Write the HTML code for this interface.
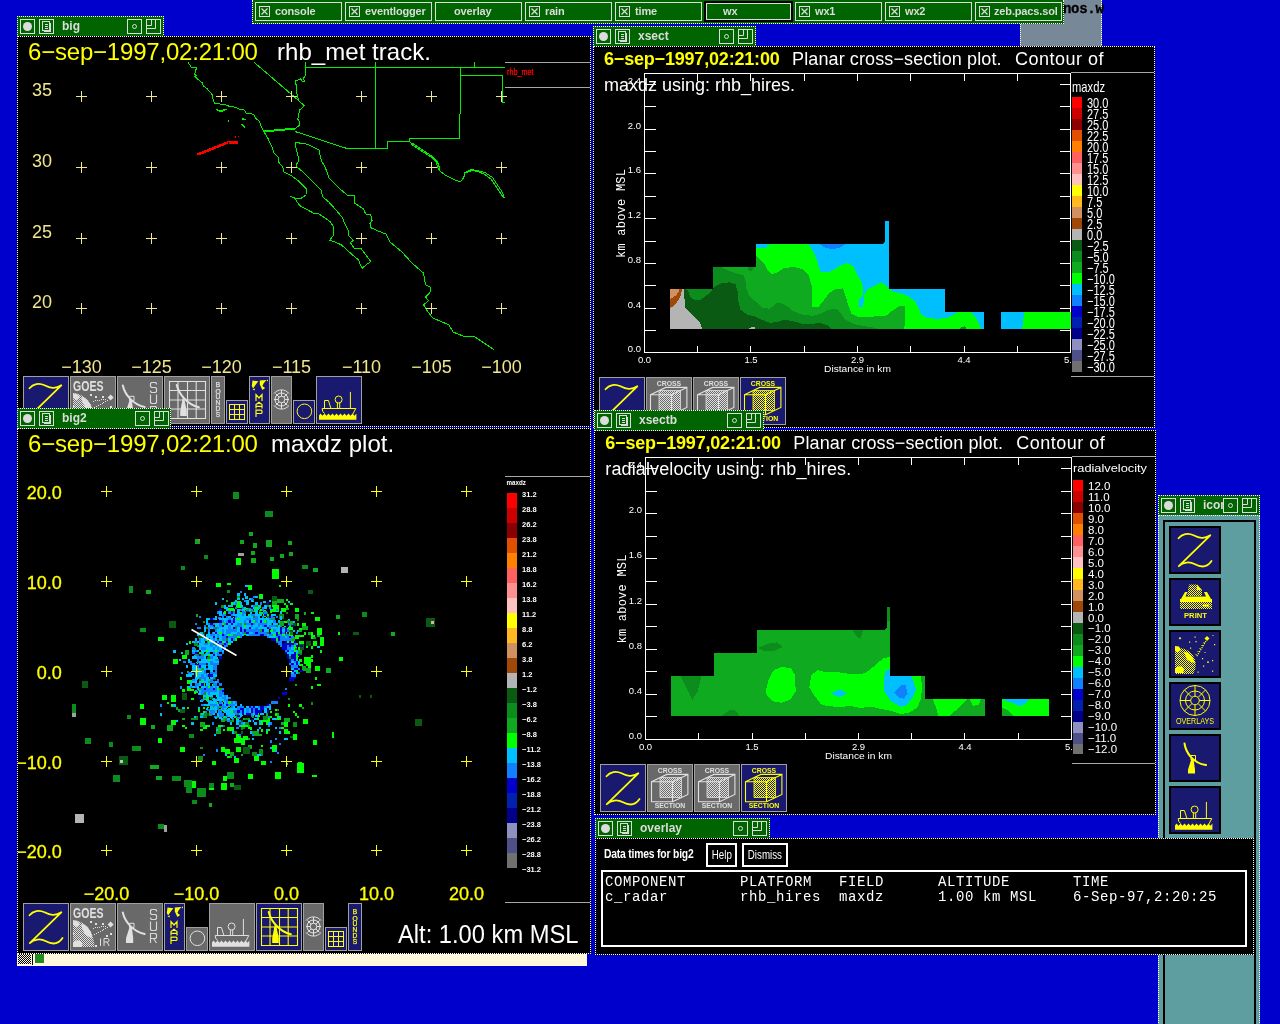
<!DOCTYPE html>
<html><head><meta charset="utf-8"><title>zeb</title>
<style>
html,body{margin:0;padding:0}
body{width:1280px;height:1024px;background:#0000cd;position:relative;overflow:hidden;font-family:"Liberation Sans",sans-serif;color:#fff}
div,span,i,svg{position:absolute;box-sizing:border-box}
svg{overflow:visible}
.dotH{height:1px;background:repeating-linear-gradient(90deg,#fff 0 1px,#000 1px 2px)}
.dotV{width:1px;background:repeating-linear-gradient(180deg,#fff 0 1px,#000 1px 2px)}
.win{background:#000;border:1px dotted #fff;overflow:hidden}
.tb{height:21px;background:#006400;border:1px dotted #fff;font:bold 12px "Liberation Sans",sans-serif;color:#dcdcdc}
.tb .b{top:2px;width:15px;height:15px;border:1px solid #dcdcdc}
.tb .c::after{content:"";position:absolute;left:2px;top:2px;width:9px;height:9px;border-radius:50%;background:#dcdcdc}
.tb .o::after{content:"";position:absolute;left:4px;top:4px;width:5px;height:5px;border-radius:50%;border:1.5px solid #dcdcdc;box-sizing:border-box}
.tb span{top:2px;line-height:14px;white-space:nowrap}
.ttl{font-size:24px;line-height:28px;white-space:nowrap;color:#fff;letter-spacing:0.05px}
.ttl b{font-weight:normal;color:#ffff00;letter-spacing:-0.2px}
.ib{background:#191970;border:1px solid #696969;outline:1px solid #808080;outline-offset:-2px}
.ig{background:#696969;border:1px solid #808080}
.ic{color:#ffff00;background:#191970;border:1px solid #a0a0a0}
.ic.g{color:#e0e0e0;background:#696969}
.ic svg{left:-1px;top:-1px}
#root{left:0;top:0;width:1280px;height:1024px;will-change:transform;overflow:hidden}
</style></head><body><div id="root">
<svg width="0" height="0" style="left:0;top:0"><defs>
<pattern id="chkw" width="2" height="2" patternUnits="userSpaceOnUse"><path d="M0 0h1v1h-1zM1 1h1v1h-1z" fill="#fff"/></pattern>
<mask id="cm" maskUnits="userSpaceOnUse" x="0" y="0" width="60" height="60"><rect width="60" height="60" fill="url(#chkw)"/></mask>
<symbol id="iz" viewBox="0 0 46 48"><path d="M6.500 12.300C10 7.800 16 6.500 21.500 9.200S32 13.500 38.300 9.300L6.800 40.200C11 36 17.500 35.300 23 38.300S34.500 42.500 39.500 35" fill="none" stroke="currentColor" stroke-width="1.8" stroke-linejoin="round" stroke-linecap="round"/></symbol>
<symbol id="igoes" viewBox="0 0 46 48"><g fill="currentColor" stroke="none">
<text x="3" y="14.900" font-family="Liberation Sans" font-weight="bold" font-size="15.500" textLength="30.500" lengthAdjust="spacingAndGlyphs">GOES</text>
<path d="M3 17.300C14 17.500 24 27 24.500 44H3z" mask="url(#cm)"/>
<path d="M3 17.300L7 17.700L10 21L6.500 24L3 22zM11 21L14.500 21.500L18 24.500L21 29.500L22.500 35L18 33.500L15 31L12.500 26.500zM3 29L5 30.500L3 32.500zM3 44V40L5.500 37.500L10 37.500L12.500 40.500L11.500 44z"/>
<path d="M40.600 18.600l3 3l-3 3l-3-3z"/>
<path shape-rendering="crispEdges" d="M23 25h1.300v1.300h-1.300zM25 24h1.300v1.300h-1.300zM27 24h1.300v1.300h-1.300zM29 24h1.300v1.300h-1.300zM31 23h1.300v1.300h-1.300zM33 23h1.300v1.300h-1.300zM35 23h1.300v1.300h-1.300zM24 31h1.300v1.300h-1.300zM26 30h1.300v1.300h-1.300zM28 29h1.300v1.300h-1.300zM30 28h1.300v1.300h-1.300zM32 27h1.300v1.300h-1.300zM33 26h1.300v1.300h-1.300zM35 25h1.300v1.300h-1.300zM37 24h1.300v1.300h-1.300zM20 18h1.500v1.500h-1.500zM25 20h1.500v1.500h-1.500zM32 20h1.500v1.500h-1.500zM40 30h1.500v1.500h-1.500zM36 32h1.500v1.500h-1.500zM25 42h1.500v1.500h-1.500z"/></g>
<path d="M30.500 35.500V43M34 43V35.500H37.500Q39 35.500 39 37.200Q39 39 37.500 39H34M37 39L39.200 43" fill="none" stroke="currentColor" stroke-width="1"/></symbol>
<symbol id="isur" viewBox="0 0 46 48"><g fill="none" stroke="currentColor" stroke-linejoin="round">
<path d="M5.800 9.500C8 19 16 28.500 27.700 31" stroke-width="2" stroke-linecap="round"/>
<path d="M12.500 20.300H17V24.700H12.500z" stroke-width="1"/>
<path d="M39.500 8.500V7.500L38.500 6.500H34.500L33.500 7.500V10.500L34.500 11.500H38.500L39.500 12.500V15.500L38.500 16.500H34.500L33.500 15.500V14.500M33.500 18.500V26.500L34.500 27.500H38.500L39.500 26.500V18.500M33.500 40V30.500H38.500L39.500 31.500V34.500L38.500 35.500H33.500M36.500 35.500L39.500 40" stroke-width="1.150" stroke="#d8d8d8"/></g>
<path d="M12.600 24L9 35.300V40H16.200V35.300L14.800 24z" fill="currentColor"/></symbol>
<symbol id="igrid" viewBox="0 0 46 48"><path d="M5.500 5.500H41.500V42.500H5.500zM14 5.500V42.500M23.500 5.500V42.500M32.200 5.500V42.500M5.500 14.500H41.500M5.500 24H41.500M5.500 33H41.500" fill="none" stroke="currentColor" stroke-width="1.100"/>
<path d="M12.700 9C15 18 23 28.500 34.900 31.300" fill="none" stroke="currentColor" stroke-width="2" stroke-linecap="round"/>
<path d="M18.700 22L16.200 35.300V40H22.800V35.300L20.500 24z" fill="currentColor"/></symbol>
<symbol id="ibnd" viewBox="0 0 14 48"><g fill="currentColor" stroke="currentColor" stroke-width="0.250" font-family="Liberation Sans" font-size="6.600" text-anchor="middle"><text x="7" y="11.300">B</text><text x="7" y="17.500">O</text><text x="7" y="23.400">U</text><text x="7" y="29.300">N</text><text x="7" y="35.200">D</text><text x="7" y="41.100">S</text></g></symbol>
<symbol id="isgrid" viewBox="0 0 22 24"><path shape-rendering="crispEdges" d="M3.500 4.500H18.500V19.500H3.500zM8.500 4.500V19.500M13.500 4.500V19.500M3.500 9.500H18.500M3.500 14.500H18.500" fill="none" stroke="currentColor" stroke-width="1.200"/></symbol>
<symbol id="imap" viewBox="0 0 21 48"><path d="M3.500 4.600L9.400 5.300L6.800 8.600L4.100 12.600L2.800 9.900zM10.800 4.600L17.400 4L14.700 7.300L13.400 9.900L16.100 11.900L13.400 13.900L10.800 8.600zM3.500 13.300L6.100 12.600L5.400 14.600zM17.500 4.500l1.500-1v2z" fill="currentColor"/>
<path d="M7 25V18.500L10 22L13 18.500V25M7 32.500V28.500L10 26.300L13 28.500V32.500M7 30.300H13M7 41V34.200H12Q13 34.200 13 35.200V36.500Q13 37.500 12 37.500H7" fill="none" stroke="currentColor" stroke-width="1.200"/></symbol>
<symbol id="iovl" viewBox="0 0 21 48"><g fill="none" stroke="currentColor" stroke-width="1"><path d="M3 17.500A9.600 9.600 0 0 1 18 17.500M3 29.500A9.600 9.600 0 0 0 18 29.500"/><circle cx="10.500" cy="23.500" r="6.500"/><circle cx="10.500" cy="23.500" r="3.300"/><path d="M10.500 14V20.200M10.500 26.800V33M3 23.500H7.200M13.800 23.500H18M4.500 17.500L8.200 21.200M16.500 17.500L12.800 21.200M4.500 29.500L8.200 25.800M16.500 29.500L12.800 25.800"/></g></symbol>
<symbol id="icirc" viewBox="0 0 22 24"><circle cx="11.400" cy="11.300" r="7.300" fill="none" stroke="currentColor" stroke-width="1"/></symbol>
<symbol id="iship" viewBox="0 0 46 48"><path d="M3 43.800V39.500l1.500-2l2 2.300l2-2.300l2 2.300l2-2.300l2 2.300l2-2.300l2 2.300l2-2.300l2 2.300l2-2.300l2 2.300l2-2.300l2 2.300l2-2.300l2 2.300l2-2.300l2 2.300l1.900-2.300V43.800z" fill="currentColor"/>
<g fill="none" stroke="currentColor" stroke-width="1"><path d="M8.500 37.500Q6 35.500 6.200 32.500H39.800L36.600 38.500M8.500 32.500V24.500H12.400L14.800 32M21.400 32.500V27M23.700 32.500V27M34.400 32.500V15.900"/><circle cx="22.600" cy="23.500" r="3.500"/></g></symbol>
<symbol id="ixs" viewBox="0 0 46 48"><g fill="currentColor" font-family="Liberation Sans" font-weight="bold" font-size="6.600"><text x="10.800" y="9" textLength="24.400" lengthAdjust="spacingAndGlyphs">CROSS</text><text x="7.700" y="43.900" textLength="30.500" lengthAdjust="spacingAndGlyphs">SECTION</text></g>
<path d="M4.500 17.700H25.500V37.800H4.500zM4.500 17.700L19.800 10.400H40.900V30.400L25.500 37.800M25.500 17.700L40.900 10.400M25.500 33.500V37.800" fill="none" stroke="currentColor" stroke-width="1.100"/>
<path d="M13 13.500H34.500V33.500H13z" fill="currentColor" mask="url(#cm)"/><path d="M13 13.500H34.500V33.500H13z" fill="none" stroke="currentColor" stroke-width="0.800"/></symbol>
<symbol id="iprint" viewBox="0 0 48 44"><g fill="currentColor"><text x="13" y="37.500" font-family="Liberation Sans" font-weight="bold" font-size="7.500" textLength="23" lengthAdjust="spacingAndGlyphs">PRINT</text>
<path d="M18 4.500H26L31 10V16H16z" mask="url(#cm)"/><path d="M26 4.500L31 10H26z"/>
<path d="M14 12L10 19H40L36 12H33L35 16.500H14.500L16.500 12zM9 19H41V22H9z"/>
<path d="M9 22H41V29H9z" mask="url(#cm)"/><path d="M32 24.500H38V26.500H32z"/></g></symbol>
<symbol id="isat" viewBox="0 0 48 44"><g fill="currentColor"><path d="M4 16.500A16.500 16.500 0 0 1 24.500 30A16.500 16.500 0 0 1 22 41.900H4z" mask="url(#cm)"/>
<path d="M4 14L8 14.500L10 18L6.500 20.500L4 19zM13 20L17 20.500L21 24.500L24 31L20 30L16 27.500zM4 41V37L6.500 34.500H10.500L13 37.500L12 41z"/>
<path d="M36 4l2.500 2.500l-2.500 2.500l-2.500-2.500z"/>
<path d="M34 9h1.200v1.200h-1.200zM32.800 11h1.200v1.200h-1.200zM31.600 13h1.200v1.200h-1.200zM30.400 15h1.200v1.200h-1.200zM29.200 17h1.200v1.200h-1.200zM28 19h1.200v1.200h-1.200zM26.800 21h1.200v1.200h-1.200zM25.600 23h1.200v1.200h-1.200zM32.500 10h1v1h-1zM30.500 13h1v1h-1zM28.500 16h1v1h-1zM26.500 19h1v1h-1zM24.500 22h1v1h-1zM9 5l1.300 1.300l-1.300 1.300l-1.300-1.300zM23.500 4.500h1.200v1.200h-1.200zM18 9.500h1.200v1.200h-1.200zM24.500 9h1.200v1.200h-1.200zM41.500 3h1v1h-1zM43 12h1.200v1.200h-1.200zM31 26h1.200v1.200h-1.200zM36 29.500h2v1.200h-2zM41 28h1.200v1.200h-1.200zM32 33.500h1.200v1.200h-1.200zM41 38.500h1.200v1.200h-1.200zM26.500 39.500h1.200v1.200h-1.200zM19 15.500h1.200v1.200h-1.200zM33.500 20h1v1h-1z"/></g></symbol>
<symbol id="iovl2" viewBox="0 0 48 44"><g fill="none" stroke="currentColor" stroke-width="1"><circle cx="24" cy="16.500" r="15"/><circle cx="24" cy="16.500" r="9.500"/><circle cx="24" cy="16.500" r="4.300"/><path d="M24 1.500V12.200M24 20.800V31.500M9 16.500H19.700M28.300 16.500H39M13.400 5.900L21 13.500M34.600 5.900L27 13.500M13.400 27.100L21 19.500M34.600 27.100L27 19.500"/></g>
<text x="5" y="39.500" fill="currentColor" font-family="Liberation Sans" font-size="8.500" textLength="38" lengthAdjust="spacingAndGlyphs">OVERLAYS</text></symbol>
<symbol id="iradar" viewBox="0 0 48 44"><path d="M13.500 7.500C15 17 22 27 35 29" fill="none" stroke="currentColor" stroke-width="2" stroke-linecap="round"/><path d="M20 19.500H24.500V24H20z" fill="none" stroke="currentColor"/><path d="M20.300 23L17 33.500V37.500H24V33.500L22.500 23z" fill="currentColor"/></symbol>
</defs></svg>



<div style="left:1020px;top:0;width:82px;height:47px;background:#778899;border-right:1px dotted #fff;border-left:1px dotted #fff"></div>
<div style="left:1063px;top:1px;font:bold 14px 'Liberation Mono',monospace;color:#000;letter-spacing:-0.3px;line-height:16px;-webkit-text-stroke:0.3px #000">nos.w</div>

<style>
#tk{left:252px;top:0;width:812px;height:24px;background:#006400;border:1px dotted #fff;border-top:none}
#tk div{top:2px;width:87px;height:19px;border:1px solid #dcdcdc;font:bold 11px "Liberation Sans",sans-serif;color:#dcdcdc;line-height:17px;white-space:nowrap}
#tk div i{left:3px;top:3px;width:11px;height:11px;border:1px solid #dcdcdc}
#tk div i svg{left:0;top:0}
#tk div span{left:19px;top:0;letter-spacing:-0.15px}
</style>
<div id="tk">
<div style="left:2px"><i><svg width="9" height="9"><path d="M1.5 1.5L7.5 7.5M7.5 1.5L1.5 7.5" stroke="#dcdcdc" stroke-width="1.3"/></svg></i><span>console</span></div>
<div style="left:92px"><i><svg width="9" height="9"><path d="M1.5 1.5L7.5 7.5M7.5 1.5L1.5 7.5" stroke="#dcdcdc" stroke-width="1.3"/></svg></i><span>eventlogger</span></div>
<div style="left:182px"><span style="left:18px">overlay</span></div>
<div style="left:272px"><i><svg width="9" height="9"><path d="M1.5 1.5L7.5 7.5M7.5 1.5L1.5 7.5" stroke="#dcdcdc" stroke-width="1.3"/></svg></i><span>rain</span></div>
<div style="left:362px"><i><svg width="9" height="9"><path d="M1.5 1.5L7.5 7.5M7.5 1.5L1.5 7.5" stroke="#dcdcdc" stroke-width="1.3"/></svg></i><span>time</span></div>
<div style="left:451px;top:1px;width:89px;height:21px;border:2px solid #000;outline:1px solid #dcdcdc;outline-offset:-3px"><span style="left:17px;top:0px">wx</span></div>
<div style="left:542px"><i><svg width="9" height="9"><path d="M1.5 1.5L7.5 7.5M7.5 1.5L1.5 7.5" stroke="#dcdcdc" stroke-width="1.3"/></svg></i><span>wx1</span></div>
<div style="left:632px"><i><svg width="9" height="9"><path d="M1.5 1.5L7.5 7.5M7.5 1.5L1.5 7.5" stroke="#dcdcdc" stroke-width="1.3"/></svg></i><span>wx2</span></div>
<div style="left:722px"><i><svg width="9" height="9"><path d="M1.5 1.5L7.5 7.5M7.5 1.5L1.5 7.5" stroke="#dcdcdc" stroke-width="1.3"/></svg></i><span style="left:18px">zeb.pacs.sol</span></div>
</div>


<div class="tb" style="left:17px;top:16px;width:147px"><i class="b c" style="left:2px"></i><i class="b d" style="left:21px"><svg width="13" height="13" shape-rendering="crispEdges"><path d="M2.500 1.500h7v9h-7zM4.500 4.500h3M4.500 6.500h3M4.500 8.500h3" fill="none" stroke="#dcdcdc"/><path d="M10.500 2.500V11.500H3.500" fill="none" stroke="#dcdcdc" stroke-width="1.6"/></svg></i><span style="left:44px">big</span><i class="b o" style="left:109px"></i><i class="b m" style="left:128px"><svg width="13" height="13"><path d="M4.5 0v5.500h-4.500M8.500 0v8.500h-8.500" fill="none" stroke="#dcdcdc"/></svg></i></div>
<div class="win" style="left:17px;top:36px;width:574px;height:391px">
<div style="left:-18px;top:-37px;width:0;height:0">
<div class="ttl" style="left:28px;top:38px"><b>6−sep−1997,02:21:00</b></div>
<div class="ttl" style="left:277px;top:38px">rhb_met track.</div>
<svg id="bigmap" width="1280" height="1024" style="left:0;top:0">
<g fill="none" stroke="#00f000" stroke-width="1" stroke-linejoin="round" shape-rendering="crispEdges">

<path d="M188 62L189.500 64.500L191 67L196.600 67.800L195.500 71L194.700 74.400L196 75.500L194.800 76.500L197.500 79L202.200 82.800L203.500 86L206.900 88.400L212.500 95L213 99L214.400 103.400L223.800 104.400L230 106.500L235 107.200L240 109.500L244.400 110L246.300 113.800L250 113.500L253.800 114.700L256 118.500L259.400 121.300L261 126L262.200 128.800L264 132"/>

<path d="M264 132L267.800 138.100L270 143L272.500 147.500L273.400 152.200L278.100 156.900L279 162.500L282.800 167.200L283.800 171.900L291.300 175.600L298.800 181.300L306.300 188.800L306 195L300 199L295 198L290.500 196.500L295 198.500L297 202L300.600 206.300L307 209.500L313.800 213.400L318.900 214L325 218L330 221.500L333 226L333.500 230.600L333 236L329.700 240.400L335 242L341.300 244.800L346 249L351.400 254L355 257L358.500 260L360 264L362.200 268.200L366 265L370.700 261.500L366 255L361 248.500L354.500 248.500L352 245L350.400 242.800L353.400 240.200L350 237L348.400 235.100L348 230L345 224L342.300 217.400L336 210L329 202.200L323 197.100L320.900 190L317.500 186.500L310.500 179.500L302.500 171.500L297 167L296 165.300L298.800 160.600L297.800 155L296 148L295 142.800"/>

<path d="M295 142.800L298 142L301 144L304 143.500L308 144.700L313 147L319.400 150.300L320 155L321.300 160.600L325 167L327 172L328.800 177.500L335 184L341.300 190L347 195L354.500 196L354.500 203L359 206L363.600 209L365.600 214L370.700 214.400L372 220.500L370 223.500L370.700 227.600L378 231L386 234L390 242L396 247L402 252L411 262L417 267.500L423.500 273L424.500 279L425.500 284.500L430.600 287.500L430 292.600L425.500 297L428.600 300.700L423.500 304.800L428 312L432.700 318L441 321.500L449 325L453 332L463 336L475 337L484 343L493.600 349.500"/>

<path d="M253.700 62L298.700 100.600L304.400 105.900L299.700 110L298.500 115L297.800 119.400L300 122L299.700 125L295 128.800"/>
<path d="M305.500 62L305.500 75L303 79L305 81.500L302.500 82L300.500 78.500L298 80L295 81L296.900 87.500L297 94L298.700 100.600"/>

<path d="M264 132L295 129M264 131L295 128M295 131.500L347 148.500L387.500 148.500L387.500 141.500L409.500 141.500L409.500 138.500L459.500 138.500L459.500 117.500L460.500 110L460.500 67.500"/>

<path d="M305.500 67.500L505 67.500M375.500 62L375.500 148.500M474.500 62L474.500 67.500M460.500 75.500L502.500 75.500L502.500 102.500L505 102.500"/>

<path d="M409.500 141.500L412.500 145L420 150L430 156.250L436.250 162.500L438.750 170L445 175L455 180L460.500 182L463.750 177.500L465 172.500L471.250 169.500L477.500 170.500L485 172.500L492.500 177.500L497.500 185L502.500 192.500L504.500 198"/>
<path d="M412 143L421 149L431 155.500L437.500 162L440 169.500M466 173L471.500 170.500L478 171.500L484 174L491 179L496 186.500L501 194L504 198"/>

<path d="M216 109.500L220 111L224 110L227 109.500M218 110.500L223 111.500M228.400 120.500L229 121.500M242 118.500L244 119.500L245.500 119M241.500 124.500L243.500 126L245.500 127.500" stroke-width="1.4"/>
</g>

<g stroke="#ff0000" fill="none" shape-rendering="crispEdges">
<path d="M197.500 154.500L228 142.500" stroke-width="2.6"/>
<path d="M228 140.500h10.500l-1 3.500h-8.500z" fill="#ff0000" stroke="none"/><path d="M235 137.500l1.500 -1M237.500 136.500h1.500" stroke-width="1.2"/>
</g>

<path d="M505 62.500H590M505 87.500H590" stroke="#a8a8a8" stroke-width="1" fill="none" shape-rendering="crispEdges"/>
<text x="507" y="75" fill="#ff0000" stroke="#ff0000" stroke-width="0.300" font-family="Liberation Sans" font-size="8.500" textLength="26.500" lengthAdjust="spacingAndGlyphs">rhb_met</text>

<path d="M76 96.5h11M81.5 91.0v11M146 96.5h11M151.5 91.0v11M216 96.5h11M221.5 91.0v11M286 96.5h11M291.5 91.0v11M356 96.5h11M361.5 91.0v11M426 96.5h11M431.5 91.0v11M496 96.5h11M501.5 91.0v11M76 167.5h11M81.5 162.0v11M146 167.5h11M151.5 162.0v11M216 167.5h11M221.5 162.0v11M286 167.5h11M291.5 162.0v11M356 167.5h11M361.5 162.0v11M426 167.5h11M431.5 162.0v11M496 167.5h11M501.5 162.0v11M76 238.5h11M81.5 233.0v11M146 238.5h11M151.5 233.0v11M216 238.5h11M221.5 233.0v11M286 238.5h11M291.5 233.0v11M356 238.5h11M361.5 233.0v11M426 238.5h11M431.5 233.0v11M496 238.5h11M501.5 233.0v11M76 308.5h11M81.5 303.0v11M146 308.5h11M151.5 303.0v11M216 308.5h11M221.5 303.0v11M286 308.5h11M291.5 303.0v11M356 308.5h11M361.5 303.0v11M426 308.5h11M431.5 303.0v11M496 308.5h11M501.5 303.0v11" stroke="#f0e68c" stroke-width="1" fill="none" shape-rendering="crispEdges"/>
<g fill="#f0e68c" font-family="Liberation Sans" font-size="18">
<text x="32" y="96.0">35</text><text x="32" y="167.0">30</text><text x="32" y="238.0">25</text><text x="32" y="308.0">20</text><text x="81.5" y="372.5" text-anchor="middle">−130</text><text x="151.5" y="372.5" text-anchor="middle">−125</text><text x="221.5" y="372.5" text-anchor="middle">−120</text><text x="291.5" y="372.5" text-anchor="middle">−115</text><text x="361.5" y="372.5" text-anchor="middle">−110</text><text x="431.5" y="372.5" text-anchor="middle">−105</text><text x="501.5" y="372.5" text-anchor="middle">−100</text></g>

</svg>

<div class="ic" style="left:23px;top:376px;width:46px;height:48px"><svg width="46" height="48"><use href="#iz"/></svg></div><div class="ic g" style="left:70px;top:376px;width:46px;height:48px"><svg width="46" height="48"><use href="#igoes"/></svg></div><div class="ic g" style="left:117px;top:376px;width:46px;height:48px"><svg width="46" height="48"><use href="#isur"/></svg></div><div class="ic g" style="left:164px;top:376px;width:46px;height:48px"><svg width="46" height="48"><use href="#igrid"/></svg></div><div class="ic g" style="left:211px;top:376px;width:14px;height:48px"><svg width="14" height="48"><use href="#ibnd"/></svg></div><div class="ic" style="left:226px;top:400px;width:22px;height:24px"><svg width="22" height="24"><use href="#isgrid"/></svg></div><div class="ic" style="left:249px;top:376px;width:21px;height:48px"><svg width="21" height="48"><use href="#imap"/></svg></div><div class="ic g" style="left:271px;top:376px;width:21px;height:48px"><svg width="21" height="48"><use href="#iovl"/></svg></div><div class="ic" style="left:293px;top:400px;width:22px;height:24px"><svg width="22" height="24"><use href="#icirc"/></svg></div><div class="ic" style="left:316px;top:376px;width:46px;height:48px"><svg width="46" height="48"><use href="#iship"/></svg></div>
</div>
</div>


<div class="win" style="left:17px;top:428px;width:574px;height:526px">
<div style="left:-18px;top:-429px;width:0;height:0">
<div class="ttl" style="left:28px;top:430px"><b>6−sep−1997,02:21:00</b></div>
<div class="ttl" style="left:271px;top:430px">maxdz plot.</div>
<svg width="1280" height="1024" style="left:0;top:0">
<g shape-rendering="crispEdges">
<path fill="#00ff00" d="M299.25 627.75h2.25v2.25h-2.25zM270 711h2.25v2.25h-2.25zM265.5 717.75h4.5v4.5h-4.5zM236.25 711h2.25v2.25h-2.25zM254.25 756h4.5v4.5h-4.5zM222.75 715.5h2.25v2.25h-2.25zM252 598.5h2.25v3.375h-2.25zM267.75 729h2.25v2.25h-2.25zM261 760.5h4.5v4.5h-4.5zM171 695.25h4.5v6.75h-4.5zM186.75 706.5h2.25v2.25h-2.25zM240.75 612h2.25v3.375h-2.25zM299.25 634.5h2.25v2.25h-2.25zM297 618.75h2.25v2.25h-2.25zM243 722.25h4.5v4.5h-4.5zM301.5 643.5h2.25v2.25h-2.25zM202.5 695.25h6.75v4.5h-6.75zM182.25 654.75h4.5v4.5h-4.5zM245.25 623.25h2.25v2.25h-2.25zM182.25 724.5h2.25v2.25h-2.25zM290.25 634.5h2.25v2.25h-2.25zM312.75 641.25h4.5v4.5h-4.5zM317.25 684h3.375v2.25h-3.375zM301.5 666h2.25v2.25h-2.25zM220.5 618.75h3.375v2.25h-3.375zM162 695.25h4.5v4.5h-4.5zM310.5 686.25h2.25v2.25h-2.25zM265.5 722.25h2.25v2.25h-2.25zM285.75 634.5h3.375v2.25h-3.375zM157.5 738h4.5v4.5h-4.5zM270 715.5h2.25v2.25h-2.25zM290.25 603h2.25v2.25h-2.25zM310.5 645.75h2.25v3.375h-2.25zM227.25 582.75h3.375v2.25h-3.375zM297 623.25h2.25v2.25h-2.25zM193.5 690.75h2.25v3.375h-2.25zM319.5 650.25h2.25v2.25h-2.25zM288 625.5h4.5v4.5h-4.5zM319.5 641.25h4.5v4.5h-4.5zM315 666h4.5v4.5h-4.5zM240.75 713.25h2.25v2.25h-2.25zM288 704.25h2.25v2.25h-2.25zM258.75 612h2.25v2.25h-2.25zM308.25 659.25h2.25v2.25h-2.25zM218.25 704.25h2.25v3.375h-2.25zM227.25 756h2.25v2.25h-2.25zM218.25 697.5h2.25v2.25h-2.25zM301.5 634.5h2.25v2.25h-2.25zM202.5 641.25h2.25v2.25h-2.25zM310.5 659.25h2.25v2.25h-2.25zM240.75 740.25h4.5v4.5h-4.5zM222.75 776.25h4.5v4.5h-4.5zM272.25 744.75h4.5v6.75h-4.5zM261 720h2.25v2.25h-2.25zM263.25 720h2.25v2.25h-2.25zM191.25 688.5h2.25v2.25h-2.25zM270 616.5h2.25v2.25h-2.25zM227.25 726.75h6.75v4.5h-6.75zM207 724.5h3.375v2.25h-3.375zM315 616.5h4.5v4.5h-4.5zM270 609.75h2.25v3.375h-2.25zM247.5 726.75h2.25v2.25h-2.25zM213.75 708.75h2.25v2.25h-2.25zM263.25 609.75h2.25v2.25h-2.25zM234 758.25h4.5v4.5h-4.5zM281.25 634.5h2.25v2.25h-2.25zM200.25 679.5h4.5v4.5h-4.5zM258.75 594h4.5v4.5h-4.5zM236.25 717.75h2.25v2.25h-2.25zM276.75 630h2.25v2.25h-2.25zM254.25 625.5h2.25v2.25h-2.25zM184.5 726.75h2.25v2.25h-2.25zM297 762.75h6.75v10.125h-6.75zM249.75 618.75h2.25v2.25h-2.25zM294.75 607.5h4.5v4.5h-4.5zM283.5 603h2.25v2.25h-2.25zM261 618.75h4.5v4.5h-4.5zM285.75 627.75h2.25v2.25h-2.25zM218.25 695.25h2.25v2.25h-2.25zM216 693h4.5v4.5h-4.5zM211.5 657h6.75v4.5h-6.75zM211.5 684h2.25v2.25h-2.25zM218.25 704.25h2.25v2.25h-2.25zM220.5 747h4.5v4.5h-4.5zM292.5 641.25h2.25v2.25h-2.25zM171 704.25h2.25v2.25h-2.25zM243 735.75h4.5v4.5h-4.5zM216 582.75h4.5v4.5h-4.5zM283.5 625.5h2.25v2.25h-2.25zM218.25 697.5h2.25v2.25h-2.25zM270 630h2.25v2.25h-2.25zM290.25 643.5h6.75v6.75h-6.75zM276.75 632.25h4.5v4.5h-4.5zM218.25 724.5h2.25v2.25h-2.25zM139.5 704.25h4.5v4.5h-4.5zM288 643.5h2.25v3.375h-2.25zM252 614.25h2.25v3.375h-2.25zM297 616.5h2.25v2.25h-2.25zM180 677.25h2.25v2.25h-2.25zM216 702h2.25v2.25h-2.25zM202.5 706.5h2.25v2.25h-2.25zM202.5 688.5h2.25v2.25h-2.25zM308.25 666h2.25v2.25h-2.25zM283.5 717.75h4.5v4.5h-4.5zM283.5 621h3.375v2.25h-3.375zM220.5 783h6.75v6.75h-6.75zM236.25 747h4.5v4.5h-4.5zM225 749.25h4.5v4.5h-4.5zM317.25 627.75h4.5v6.75h-4.5zM285.75 632.25h4.5v4.5h-4.5zM171 720h4.5v4.5h-4.5zM252 618.75h2.25v3.375h-2.25zM204.75 661.5h4.5v4.5h-4.5zM261 627.75h2.25v3.375h-2.25zM310.5 634.5h4.5v4.5h-4.5zM234 715.5h2.25v2.25h-2.25zM254.25 614.25h4.5v4.5h-4.5zM200.25 729h2.25v2.25h-2.25zM252 720h2.25v2.25h-2.25zM299.25 641.25h4.5v4.5h-4.5zM279 636.75h2.25v2.25h-2.25zM312.75 740.25h4.5v4.5h-4.5zM254.25 605.25h4.5v4.5h-4.5zM272.25 630h2.25v2.25h-2.25zM294.75 657h2.25v2.25h-2.25zM229.5 729h2.25v2.25h-2.25zM240.75 724.5h2.25v2.25h-2.25zM236.25 632.25h4.5v4.5h-4.5zM240.75 713.25h2.25v2.25h-2.25zM191.25 679.5h2.25v2.25h-2.25zM236.25 733.5h4.5v4.5h-4.5zM270 722.25h2.25v2.25h-2.25zM285.75 598.5h2.25v2.25h-2.25zM195.75 661.5h2.25v2.25h-2.25zM279 632.25h2.25v3.375h-2.25zM272.25 627.75h4.5v4.5h-4.5zM303.75 657h6.75v6.75h-6.75zM290.25 627.75h2.25v2.25h-2.25zM189 780.75h6.75v6.75h-6.75zM265.5 731.25h2.25v2.25h-2.25zM261 722.25h2.25v2.25h-2.25zM236.25 738h2.25v2.25h-2.25zM207 677.25h2.25v2.25h-2.25zM256.5 717.75h2.25v2.25h-2.25zM238.5 627.75h2.25v3.375h-2.25zM139.5 717.75h6.75v6.75h-6.75zM247.5 614.25h2.25v2.25h-2.25zM202.5 641.25h2.25v2.25h-2.25zM211.5 663.75h2.25v2.25h-2.25zM198 708.75h2.25v3.375h-2.25zM261 729h2.25v3.375h-2.25zM274.5 771.75h6.75v6.75h-6.75zM303.75 632.25h2.25v2.25h-2.25zM236.25 600.75h4.5v6.75h-4.5zM274.5 708.75h2.25v2.25h-2.25zM252 625.5h2.25v3.375h-2.25zM231.75 625.5h3.375v2.25h-3.375zM288 632.25h4.5v4.5h-4.5zM297 715.5h2.25v2.25h-2.25zM243 724.5h2.25v2.25h-2.25zM315 677.25h2.25v2.25h-2.25zM299.25 663.75h3.375v2.25h-3.375zM263.25 614.25h2.25v2.25h-2.25zM218.25 641.25h2.25v2.25h-2.25zM299.25 659.25h2.25v2.25h-2.25zM213.75 639h2.25v2.25h-2.25zM283.5 634.5h4.5v4.5h-4.5zM180 708.75h2.25v2.25h-2.25zM247.5 585h4.5v4.5h-4.5zM337.5 632.25h2.25v2.25h-2.25zM213.75 697.5h2.25v2.25h-2.25zM225 706.5h2.25v2.25h-2.25zM243 630h6.75v4.5h-6.75zM272.25 605.25h6.75v6.75h-6.75zM186.75 686.25h4.5v4.5h-4.5zM243 616.5h3.375v2.25h-3.375zM227.25 711h2.25v2.25h-2.25zM227.25 713.25h3.375v2.25h-3.375zM236.25 558h4.5v6.75h-4.5zM294.75 634.5h4.5v4.5h-4.5zM243 607.5h2.25v2.25h-2.25zM256.5 715.5h2.25v2.25h-2.25zM301.5 623.25h4.5v4.5h-4.5zM213.75 733.5h2.25v2.25h-2.25zM285.75 634.5h2.25v2.25h-2.25zM234 621h2.25v2.25h-2.25zM292.5 648h4.5v4.5h-4.5zM222.75 729h2.25v2.25h-2.25zM180 747h4.5v4.5h-4.5zM279 585h2.25v2.25h-2.25zM281.25 607.5h4.5v4.5h-4.5zM229.5 607.5h4.5v4.5h-4.5zM285.75 641.25h2.25v2.25h-2.25zM306 645.75h2.25v2.25h-2.25zM225 753.75h2.25v2.25h-2.25zM213.75 688.5h2.25v3.375h-2.25zM240.75 713.25h2.25v2.25h-2.25zM240.75 627.75h4.5v4.5h-4.5zM263.25 623.25h3.375v3.375h-3.375zM231.75 708.75h2.25v2.25h-2.25zM254.25 609.75h2.25v2.25h-2.25zM252 713.25h2.25v2.25h-2.25zM236.25 722.25h2.25v2.25h-2.25zM222.75 708.75h2.25v3.375h-2.25zM220.5 634.5h2.25v2.25h-2.25zM189 641.25h2.25v2.25h-2.25zM258.75 627.75h2.25v2.25h-2.25zM285.75 605.25h2.25v2.25h-2.25zM283.5 722.25h4.5v4.5h-4.5zM265.5 616.5h2.25v2.25h-2.25zM288 641.25h4.5v4.5h-4.5zM166.5 702h2.25v2.25h-2.25zM270 618.75h2.25v2.25h-2.25zM182.25 688.5h2.25v3.375h-2.25zM236.25 738h4.5v4.5h-4.5zM207 699.75h2.25v2.25h-2.25zM310.5 632.25h2.25v2.25h-2.25zM195.75 690.75h2.25v2.25h-2.25zM292.5 733.5h4.5v6.75h-4.5zM272.25 569.25h6.75v10.125h-6.75zM256.5 713.25h2.25v2.25h-2.25zM283.5 729h4.5v4.5h-4.5zM229.5 616.5h4.5v4.5h-4.5zM281.25 636.75h2.25v3.375h-2.25zM299.25 704.25h2.25v2.25h-2.25zM238.5 711h4.5v4.5h-4.5zM279 632.25h2.25v2.25h-2.25zM267.75 717.75h2.25v2.25h-2.25zM186.75 679.5h4.5v4.5h-4.5zM306 661.5h4.5v4.5h-4.5zM211.5 675h4.5v4.5h-4.5zM292.5 711h2.25v2.25h-2.25zM191.25 697.5h2.25v2.25h-2.25zM202.5 724.5h4.5v4.5h-4.5zM240.75 738h4.5v4.5h-4.5zM288 731.25h2.25v2.25h-2.25zM290.25 648h2.25v2.25h-2.25zM222.75 699.75h3.375v2.25h-3.375zM211.5 760.5h4.5v4.5h-4.5zM216 695.25h2.25v2.25h-2.25zM238.5 612h3.375v2.25h-3.375zM281.25 726.75h2.25v2.25h-2.25zM227.25 607.5h2.25v3.375h-2.25zM294.75 713.25h2.25v2.25h-2.25zM234 738h4.5v4.5h-4.5zM222.75 706.5h2.25v2.25h-2.25zM249.75 720h2.25v2.25h-2.25zM227.25 630h2.25v3.375h-2.25zM276.75 715.5h4.5v4.5h-4.5zM310.5 654.75h2.25v3.375h-2.25zM249.75 726.75h2.25v3.375h-2.25zM202.5 684h2.25v2.25h-2.25zM238.5 632.25h2.25v3.375h-2.25zM202.5 711h4.5v4.5h-4.5zM279 634.5h3.375v2.25h-3.375zM261 744.75h2.25v2.25h-2.25zM173.25 659.25h4.5v4.5h-4.5zM290.25 632.25h2.25v2.25h-2.25zM274.5 713.25h2.25v2.25h-2.25zM209.25 785.25h4.5v4.5h-4.5zM177.75 708.75h3.375v2.25h-3.375zM225 702h2.25v2.25h-2.25zM157.5 636.75h6.75v4.5h-6.75zM243 607.5h4.5v4.5h-4.5zM283.5 720h2.25v2.25h-2.25zM243 616.5h3.375v2.25h-3.375zM258.75 605.25h2.25v2.25h-2.25zM258.75 625.5h4.5v4.5h-4.5zM297 661.5h2.25v2.25h-2.25zM238.5 713.25h2.25v2.25h-2.25zM294.75 650.25h4.5v6.75h-4.5zM207 704.25h2.25v3.375h-2.25zM225 702h4.5v4.5h-4.5zM319.5 636.75h4.5v4.5h-4.5zM310.5 612h3.375v2.25h-3.375z"/>
<path fill="#10aa20" d="M294.75 684h2.25v2.25h-2.25zM308.25 632.25h2.25v2.25h-2.25zM272.25 618.75h2.25v2.25h-2.25zM290.25 639h2.25v2.25h-2.25zM285.75 639h3.375v2.25h-3.375zM229.5 625.5h2.25v3.375h-2.25zM247.5 724.5h2.25v2.25h-2.25zM247.5 717.75h2.25v2.25h-2.25zM303.75 612h2.25v3.375h-2.25zM276.75 598.5h6.75v4.5h-6.75zM231.75 720h2.25v2.25h-2.25zM236.25 708.75h2.25v2.25h-2.25zM252 731.25h6.75v4.5h-6.75zM229.5 706.5h2.25v2.25h-2.25zM243 722.25h3.375v2.25h-3.375zM317.25 634.5h2.25v2.25h-2.25zM279 715.5h2.25v2.25h-2.25zM229.5 756h2.25v2.25h-2.25zM211.5 645.75h2.25v3.375h-2.25zM218.25 708.75h2.25v3.375h-2.25zM177.75 708.75h2.25v3.375h-2.25zM265.5 540h6.75v6.75h-6.75zM265.5 713.25h2.25v2.25h-2.25zM294.75 614.25h4.5v4.5h-4.5zM240.75 753.75h2.25v2.25h-2.25zM220.5 717.75h4.5v4.5h-4.5zM225 634.5h2.25v2.25h-2.25zM299.25 630h2.25v2.25h-2.25zM216 726.75h4.5v6.75h-4.5zM227.25 625.5h4.5v4.5h-4.5zM200.25 652.5h2.25v2.25h-2.25zM276.75 713.25h2.25v2.25h-2.25zM283.5 717.75h6.75v4.5h-6.75zM182.25 717.75h2.25v2.25h-2.25zM312.75 636.75h3.375v2.25h-3.375zM229.5 751.5h4.5v4.5h-4.5zM238.5 711h2.25v2.25h-2.25zM265.5 618.75h4.5v4.5h-4.5zM240.75 711h2.25v2.25h-2.25zM240.75 630h2.25v2.25h-2.25zM195.75 614.25h2.25v2.25h-2.25zM209.25 713.25h2.25v2.25h-2.25zM256.5 625.5h4.5v4.5h-4.5zM186.75 670.5h2.25v2.25h-2.25zM200.25 713.25h2.25v2.25h-2.25zM270 623.25h2.25v2.25h-2.25zM297 650.25h4.5v4.5h-4.5zM281.25 722.25h2.25v2.25h-2.25zM285.75 607.5h3.375v2.25h-3.375zM150.75 724.5h4.5v4.5h-4.5zM252 715.5h2.25v2.25h-2.25zM306 668.25h4.5v4.5h-4.5zM184.5 650.25h4.5v4.5h-4.5zM175.5 706.5h2.25v3.375h-2.25zM238.5 715.5h2.25v2.25h-2.25zM258.75 733.5h3.375v2.25h-3.375zM272.25 598.5h4.5v6.75h-4.5zM297 650.25h2.25v2.25h-2.25zM301.5 706.5h2.25v2.25h-2.25zM220.5 704.25h2.25v2.25h-2.25zM290.25 636.75h4.5v4.5h-4.5zM288 643.5h2.25v2.25h-2.25zM326.25 668.25h4.5v4.5h-4.5zM213.75 650.25h2.25v2.25h-2.25zM283.5 639h2.25v2.25h-2.25zM265.5 621h2.25v2.25h-2.25zM209.25 702h2.25v2.25h-2.25zM166.5 724.5h6.75v6.75h-6.75zM193.5 648h2.25v2.25h-2.25zM301.5 666h4.5v4.5h-4.5zM247.5 607.5h6.75v4.5h-6.75zM243 717.75h2.25v2.25h-2.25zM146.25 589.5h4.5v4.5h-4.5zM211.5 704.25h6.75v4.5h-6.75zM247.5 744.75h4.5v4.5h-4.5zM247.5 744.75h2.25v2.25h-2.25zM204.75 652.5h3.375v2.25h-3.375zM285.75 630h2.25v2.25h-2.25zM256.5 614.25h2.25v2.25h-2.25zM292.5 639h2.25v2.25h-2.25zM261 625.5h4.5v4.5h-4.5zM288 621h4.5v4.5h-4.5zM200.25 722.25h4.5v4.5h-4.5zM279 621h4.5v4.5h-4.5zM247.5 738h2.25v2.25h-2.25zM301.5 625.5h6.75v4.5h-6.75z"/>
<path fill="#0c8c1c" d="M195.75 677.25h2.25v2.25h-2.25zM362.25 612h4.5v4.5h-4.5zM258.75 609.75h2.25v2.25h-2.25zM209.25 663.75h4.5v4.5h-4.5zM200.25 747h2.25v2.25h-2.25zM254.25 618.75h2.25v2.25h-2.25zM220.5 605.25h3.375v2.25h-3.375zM207 663.75h2.25v2.25h-2.25zM234 731.25h3.375v2.25h-3.375zM290.25 632.25h2.25v2.25h-2.25zM213.75 690.75h2.25v2.25h-2.25zM202.5 621h2.25v2.25h-2.25zM297 618.75h2.25v2.25h-2.25zM261 612h3.375v2.25h-3.375zM299.25 652.5h2.25v2.25h-2.25zM258.75 749.25h4.5v6.75h-4.5zM292.5 722.25h4.5v4.5h-4.5zM218.25 715.5h2.25v2.25h-2.25zM207 661.5h2.25v2.25h-2.25zM202.5 713.25h4.5v4.5h-4.5zM216 639h4.5v4.5h-4.5zM229.5 720h2.25v2.25h-2.25zM294.75 648h2.25v2.25h-2.25zM245.25 717.75h2.25v2.25h-2.25zM227.25 589.5h2.25v3.375h-2.25zM236.25 711h3.375v2.25h-3.375zM216 634.5h2.25v2.25h-2.25zM238.5 623.25h2.25v2.25h-2.25zM189 733.5h4.5v4.5h-4.5zM234 600.75h2.25v2.25h-2.25zM198 756h4.5v4.5h-4.5zM139.5 627.75h6.75v4.5h-6.75zM207 708.75h2.25v2.25h-2.25zM245.25 722.25h3.375v2.25h-3.375zM209.25 783h4.5v4.5h-4.5zM276.75 708.75h2.25v2.25h-2.25zM263.25 715.5h4.5v4.5h-4.5zM227.25 771.75h6.75v6.75h-6.75zM240.75 726.75h2.25v3.375h-2.25zM207 657h2.25v2.25h-2.25zM265.5 612h2.25v2.25h-2.25zM218.25 713.25h2.25v2.25h-2.25zM202.5 713.25h2.25v3.375h-2.25zM222.75 724.5h2.25v2.25h-2.25zM225 717.75h2.25v3.375h-2.25zM301.5 564.75h6.75v4.5h-6.75zM193.5 715.5h4.5v4.5h-4.5zM285.75 612h2.25v2.25h-2.25zM236.25 708.75h2.25v2.25h-2.25zM252 751.5h4.5v4.5h-4.5zM193.5 641.25h4.5v4.5h-4.5zM191.25 717.75h2.25v2.25h-2.25zM274.5 625.5h2.25v2.25h-2.25zM207 650.25h2.25v2.25h-2.25zM288 630h2.25v2.25h-2.25zM202.5 672.75h2.25v2.25h-2.25zM236.25 713.25h4.5v4.5h-4.5zM238.5 720h4.5v4.5h-4.5zM207 643.5h4.5v4.5h-4.5zM310.5 702h2.25v3.375h-2.25zM279 614.25h4.5v4.5h-4.5zM288 697.5h2.25v2.25h-2.25zM243 726.75h2.25v2.25h-2.25zM249.75 614.25h4.5v4.5h-4.5zM272.25 625.5h2.25v3.375h-2.25zM216 715.5h2.25v2.25h-2.25zM204.75 661.5h4.5v4.5h-4.5zM281.25 634.5h2.25v2.25h-2.25z"/>
<path fill="#0a5a14" d="M292.5 623.25h3.375v2.25h-3.375zM234 632.25h2.25v3.375h-2.25zM227.25 634.5h2.25v2.25h-2.25zM198 632.25h6.75v6.75h-6.75zM182.25 693h4.5v6.75h-4.5zM245.25 609.75h3.375v2.25h-3.375zM218.25 702h2.25v2.25h-2.25zM290.25 735.75h2.25v2.25h-2.25zM238.5 720h4.5v4.5h-4.5zM211.5 675h4.5v4.5h-4.5zM252 607.5h2.25v3.375h-2.25zM207 704.25h2.25v2.25h-2.25zM168.75 621h6.75v6.75h-6.75zM299.25 643.5h4.5v6.75h-4.5zM216 632.25h2.25v2.25h-2.25zM279 627.75h2.25v2.25h-2.25zM245.25 618.75h3.375v2.25h-3.375zM240.75 731.25h2.25v2.25h-2.25zM288 621h2.25v2.25h-2.25zM272.25 596.25h4.5v4.5h-4.5zM180 708.75h4.5v4.5h-4.5zM306 641.25h4.5v4.5h-4.5zM290.25 630h3.375v2.25h-3.375zM234 785.25h6.75v4.5h-6.75zM258.75 720h2.25v2.25h-2.25zM209.25 645.75h4.5v4.5h-4.5zM308.25 589.5h4.5v4.5h-4.5zM243 747h6.75v6.75h-6.75zM281.25 634.5h4.5v4.5h-4.5zM207 713.25h2.25v2.25h-2.25zM216 690.75h4.5v4.5h-4.5z"/>
<path fill="#00bfff" d="M173.25 704.25h2.25v2.25h-2.25zM272.25 717.75h2.25v2.25h-2.25zM220.5 702h2.25v2.25h-2.25zM258.75 753.75h2.25v2.25h-2.25zM211.5 697.5h2.25v2.25h-2.25zM191.25 672.75h2.25v2.25h-2.25zM274.5 717.75h2.25v2.25h-2.25zM256.5 753.75h2.25v2.25h-2.25zM220.5 708.75h2.25v2.25h-2.25zM229.5 715.5h2.25v2.25h-2.25zM198 706.5h2.25v2.25h-2.25zM283.5 738h2.25v2.25h-2.25zM207 672.75h2.25v2.25h-2.25zM225 753.75h2.25v2.25h-2.25zM231.75 731.25h2.25v2.25h-2.25zM267.75 722.25h2.25v2.25h-2.25zM204.75 672.75h2.25v2.25h-2.25zM220.5 717.75h2.25v2.25h-2.25zM202.5 693h2.25v2.25h-2.25zM220.5 704.25h2.25v2.25h-2.25zM249.75 731.25h2.25v2.25h-2.25zM229.5 722.25h2.25v2.25h-2.25zM220.5 717.75h2.25v2.25h-2.25zM182.25 706.5h2.25v2.25h-2.25zM274.5 749.25h2.25v2.25h-2.25zM279 715.5h2.25v2.25h-2.25zM265.5 729h2.25v2.25h-2.25zM195.75 677.25h2.25v2.25h-2.25zM285.75 762.75h2.25v2.25h-2.25zM220.5 706.5h2.25v2.25h-2.25zM256.5 729h2.25v2.25h-2.25zM216 729h2.25v2.25h-2.25zM247.5 720h2.25v2.25h-2.25zM213.75 733.5h2.25v2.25h-2.25zM204.75 711h2.25v2.25h-2.25zM198 693h2.25v2.25h-2.25zM238.5 724.5h2.25v2.25h-2.25zM238.5 713.25h2.25v2.25h-2.25zM243 722.25h2.25v2.25h-2.25zM252 720h2.25v2.25h-2.25zM285.75 738h2.25v2.25h-2.25zM202.5 672.75h2.25v2.25h-2.25zM252 738h2.25v2.25h-2.25zM193.5 715.5h2.25v2.25h-2.25zM220.5 724.5h2.25v2.25h-2.25zM234 756h2.25v2.25h-2.25zM159.75 713.25h2.25v2.25h-2.25zM227.25 717.75h2.25v2.25h-2.25zM220.5 704.25h2.25v2.25h-2.25zM204.75 695.25h2.25v2.25h-2.25zM258.75 726.75h2.25v2.25h-2.25zM191.25 722.25h2.25v2.25h-2.25zM225 715.5h2.25v2.25h-2.25zM258.75 720h2.25v2.25h-2.25zM274.5 726.75h2.25v2.25h-2.25zM209.25 711h2.25v2.25h-2.25zM236.25 720h2.25v2.25h-2.25zM254.25 717.75h2.25v2.25h-2.25zM198 688.5h2.25v2.25h-2.25zM254.25 722.25h2.25v2.25h-2.25zM279 731.25h2.25v2.25h-2.25zM202.5 681.75h2.25v2.25h-2.25zM207 679.5h2.25v2.25h-2.25zM270 747h2.25v2.25h-2.25zM236.25 722.25h2.25v2.25h-2.25zM200.25 699.75h2.25v2.25h-2.25zM175.5 720h2.25v2.25h-2.25zM200.25 715.5h2.25v2.25h-2.25zM225 715.5h2.25v2.25h-2.25zM227.25 708.75h2.25v2.25h-2.25zM213.75 706.5h2.25v2.25h-2.25zM258.75 722.25h2.25v2.25h-2.25zM204.75 643.5h2.25v2.25h-2.25zM288 618.75h2.25v2.25h-2.25zM292.5 630h2.25v2.25h-2.25zM222.75 612h2.25v2.25h-2.25zM193.5 654.75h2.25v2.25h-2.25zM270 607.5h2.25v2.25h-2.25zM297 630h2.25v2.25h-2.25zM267.75 616.5h2.25v2.25h-2.25zM263.25 600.75h2.25v2.25h-2.25zM173.25 650.25h2.25v2.25h-2.25zM292.5 621h2.25v2.25h-2.25zM245.25 596.25h2.25v2.25h-2.25zM261 612h2.25v2.25h-2.25zM225 618.75h2.25v2.25h-2.25zM200.25 632.25h2.25v2.25h-2.25zM317.25 645.75h2.25v2.25h-2.25zM249.75 612h2.25v2.25h-2.25zM240.75 605.25h2.25v2.25h-2.25zM245.25 585h2.25v2.25h-2.25zM288 600.75h2.25v2.25h-2.25z"/>
<path fill="#1080ff" d="M207 684h2.25v2.25h-2.25zM270 722.25h2.25v2.25h-2.25zM225 708.75h2.25v2.25h-2.25zM270 740.25h2.25v2.25h-2.25zM274.5 738h2.25v2.25h-2.25zM227.25 711h2.25v2.25h-2.25zM238.5 733.5h2.25v2.25h-2.25zM279 742.5h2.25v2.25h-2.25zM218.25 704.25h2.25v2.25h-2.25zM209.25 708.75h2.25v2.25h-2.25zM279 726.75h2.25v2.25h-2.25zM209.25 699.75h2.25v2.25h-2.25zM227.25 720h2.25v2.25h-2.25zM198 672.75h2.25v2.25h-2.25zM267.75 715.5h2.25v2.25h-2.25zM267.75 724.5h2.25v2.25h-2.25zM236.25 726.75h2.25v2.25h-2.25zM204.75 672.75h2.25v2.25h-2.25zM180 686.25h2.25v2.25h-2.25zM216 749.25h2.25v2.25h-2.25zM252 733.5h2.25v2.25h-2.25zM204.75 711h2.25v2.25h-2.25zM195.75 684h2.25v2.25h-2.25zM270 760.5h2.25v2.25h-2.25zM202.5 753.75h2.25v2.25h-2.25zM238.5 715.5h2.25v2.25h-2.25zM159.75 704.25h2.25v2.25h-2.25zM270 722.25h2.25v2.25h-2.25zM207 675h2.25v2.25h-2.25zM256.5 715.5h2.25v2.25h-2.25zM211.5 722.25h2.25v2.25h-2.25zM213.75 715.5h2.25v2.25h-2.25zM276.75 751.5h2.25v2.25h-2.25zM231.75 717.75h2.25v2.25h-2.25zM238.5 720h2.25v2.25h-2.25zM240.75 722.25h2.25v2.25h-2.25zM218.25 711h2.25v2.25h-2.25zM207 641.25h2.25v2.25h-2.25zM211.5 632.25h2.25v2.25h-2.25zM288 623.25h2.25v2.25h-2.25zM211.5 625.5h2.25v2.25h-2.25zM272.25 616.5h2.25v2.25h-2.25zM218.25 616.5h2.25v2.25h-2.25zM243 612h2.25v2.25h-2.25zM220.5 627.75h2.25v2.25h-2.25zM252 598.5h2.25v2.25h-2.25z"/>
<path fill="#1080ff" d="M239.57 591.12h2.25v2.25h-2.25zM253.07 595.62h2.25v2.25h-2.25zM250.82 597.88h2.25v2.25h-2.25zM244.07 600.12h2.25v2.25h-2.25zM235.07 602.38h2.25v2.25h-2.25zM259.82 602.38h2.25v2.25h-2.25zM253.07 604.62h2.25v2.25h-2.25zM235.07 606.88h2.25v2.25h-2.25zM241.82 606.88h2.25v2.25h-2.25zM262.07 606.88h2.25v2.25h-2.25zM268.82 606.88h2.25v2.25h-2.25zM239.57 609.12h2.25v2.25h-2.25zM246.32 609.12h2.25v2.25h-2.25zM250.82 609.12h2.25v2.25h-2.25zM262.07 609.12h2.25v2.25h-2.25zM275.57 609.12h2.25v2.25h-2.25zM217.07 611.38h2.25v2.25h-2.25zM228.32 611.38h2.25v2.25h-2.25zM232.82 611.38h2.25v2.25h-2.25zM241.82 611.38h2.25v2.25h-2.25zM244.07 611.38h2.25v2.25h-2.25zM264.32 611.38h2.25v2.25h-2.25zM221.57 613.62h2.25v2.25h-2.25zM223.82 613.62h2.25v2.25h-2.25zM230.57 613.62h2.25v2.25h-2.25zM241.82 613.62h2.25v2.25h-2.25zM250.82 613.62h2.25v2.25h-2.25zM253.07 613.62h2.25v2.25h-2.25zM199.07 615.88h2.25v2.25h-2.25zM221.57 615.88h2.25v2.25h-2.25zM226.07 615.88h2.25v2.25h-2.25zM235.07 615.88h2.25v2.25h-2.25zM255.32 615.88h2.25v2.25h-2.25zM262.07 615.88h2.25v2.25h-2.25zM271.07 615.88h2.25v2.25h-2.25zM275.57 615.88h2.25v2.25h-2.25zM212.57 618.12h2.25v2.25h-2.25zM228.32 618.12h2.25v2.25h-2.25zM246.32 618.12h2.25v2.25h-2.25zM248.57 618.12h2.25v2.25h-2.25zM253.07 618.12h2.25v2.25h-2.25zM255.32 618.12h2.25v2.25h-2.25zM268.82 618.12h2.25v2.25h-2.25zM221.57 620.38h2.25v2.25h-2.25zM226.07 620.38h2.25v2.25h-2.25zM230.57 620.38h2.25v2.25h-2.25zM244.07 620.38h2.25v2.25h-2.25zM255.32 620.38h2.25v2.25h-2.25zM273.32 620.38h2.25v2.25h-2.25zM194.57 622.62h2.25v2.25h-2.25zM208.07 622.62h2.25v2.25h-2.25zM212.57 622.62h2.25v2.25h-2.25zM219.32 622.62h2.25v2.25h-2.25zM237.32 622.62h2.25v2.25h-2.25zM246.32 622.62h2.25v2.25h-2.25zM248.57 622.62h2.25v2.25h-2.25zM253.07 622.62h2.25v2.25h-2.25zM257.57 622.62h2.25v2.25h-2.25zM259.82 622.62h2.25v2.25h-2.25zM262.07 622.62h2.25v2.25h-2.25zM264.32 622.62h2.25v2.25h-2.25zM203.57 624.88h2.25v2.25h-2.25zM210.32 624.88h2.25v2.25h-2.25zM219.32 624.88h2.25v2.25h-2.25zM228.32 624.88h2.25v2.25h-2.25zM235.07 624.88h2.25v2.25h-2.25zM237.32 624.88h2.25v2.25h-2.25zM239.57 624.88h2.25v2.25h-2.25zM250.82 624.88h2.25v2.25h-2.25zM257.57 624.88h2.25v2.25h-2.25zM262.07 624.88h2.25v2.25h-2.25zM268.82 624.88h2.25v2.25h-2.25zM271.07 624.88h2.25v2.25h-2.25zM273.32 624.88h2.25v2.25h-2.25zM196.82 627.12h2.25v2.25h-2.25zM199.07 627.12h2.25v2.25h-2.25zM208.07 627.12h2.25v2.25h-2.25zM212.57 627.12h2.25v2.25h-2.25zM217.07 627.12h2.25v2.25h-2.25zM228.32 627.12h2.25v2.25h-2.25zM255.32 627.12h2.25v2.25h-2.25zM268.82 627.12h2.25v2.25h-2.25zM282.32 627.12h2.25v2.25h-2.25zM208.07 629.38h2.25v2.25h-2.25zM214.82 629.38h2.25v2.25h-2.25zM221.57 629.38h2.25v2.25h-2.25zM226.07 629.38h2.25v2.25h-2.25zM228.32 629.38h2.25v2.25h-2.25zM230.57 629.38h2.25v2.25h-2.25zM232.82 629.38h2.25v2.25h-2.25zM235.07 629.38h2.25v2.25h-2.25zM241.82 629.38h2.25v2.25h-2.25zM246.32 629.38h2.25v2.25h-2.25zM248.57 629.38h2.25v2.25h-2.25zM250.82 629.38h2.25v2.25h-2.25zM253.07 629.38h2.25v2.25h-2.25zM255.32 629.38h2.25v2.25h-2.25zM257.57 629.38h2.25v2.25h-2.25zM273.32 629.38h2.25v2.25h-2.25zM286.82 629.38h2.25v2.25h-2.25zM221.57 631.62h2.25v2.25h-2.25zM226.07 631.62h2.25v2.25h-2.25zM228.32 631.62h2.25v2.25h-2.25zM237.32 631.62h2.25v2.25h-2.25zM241.82 631.62h2.25v2.25h-2.25zM253.07 631.62h2.25v2.25h-2.25zM257.57 631.62h2.25v2.25h-2.25zM259.82 631.62h2.25v2.25h-2.25zM262.07 631.62h2.25v2.25h-2.25zM264.32 631.62h2.25v2.25h-2.25zM282.32 631.62h2.25v2.25h-2.25zM295.82 631.62h2.25v2.25h-2.25zM210.32 633.88h2.25v2.25h-2.25zM212.57 633.88h2.25v2.25h-2.25zM217.07 633.88h2.25v2.25h-2.25zM223.82 633.88h2.25v2.25h-2.25zM235.07 633.88h2.25v2.25h-2.25zM237.32 633.88h2.25v2.25h-2.25zM239.57 633.88h2.25v2.25h-2.25zM248.57 633.88h2.25v2.25h-2.25zM250.82 633.88h2.25v2.25h-2.25zM253.07 633.88h2.25v2.25h-2.25zM255.32 633.88h2.25v2.25h-2.25zM257.57 633.88h2.25v2.25h-2.25zM264.32 633.88h2.25v2.25h-2.25zM268.82 633.88h2.25v2.25h-2.25zM271.07 633.88h2.25v2.25h-2.25zM277.82 633.88h2.25v2.25h-2.25zM280.07 633.88h2.25v2.25h-2.25zM284.57 633.88h2.25v2.25h-2.25zM286.82 633.88h2.25v2.25h-2.25zM217.07 636.12h2.25v2.25h-2.25zM221.57 636.12h2.25v2.25h-2.25zM223.82 636.12h2.25v2.25h-2.25zM228.32 636.12h2.25v2.25h-2.25zM230.57 636.12h2.25v2.25h-2.25zM232.82 636.12h2.25v2.25h-2.25zM235.07 636.12h2.25v2.25h-2.25zM239.57 636.12h2.25v2.25h-2.25zM266.57 636.12h2.25v2.25h-2.25zM275.57 636.12h2.25v2.25h-2.25zM280.07 636.12h2.25v2.25h-2.25zM282.32 636.12h2.25v2.25h-2.25zM286.82 636.12h2.25v2.25h-2.25zM291.32 636.12h2.25v2.25h-2.25zM199.07 638.38h2.25v2.25h-2.25zM203.57 638.38h2.25v2.25h-2.25zM212.57 638.38h2.25v2.25h-2.25zM221.57 638.38h2.25v2.25h-2.25zM223.82 638.38h2.25v2.25h-2.25zM232.82 638.38h2.25v2.25h-2.25zM280.07 638.38h2.25v2.25h-2.25zM282.32 638.38h2.25v2.25h-2.25zM284.57 638.38h2.25v2.25h-2.25zM286.82 638.38h2.25v2.25h-2.25zM289.07 638.38h2.25v2.25h-2.25zM194.57 640.62h2.25v2.25h-2.25zM199.07 640.62h2.25v2.25h-2.25zM275.57 640.62h2.25v2.25h-2.25zM277.82 640.62h2.25v2.25h-2.25zM280.07 640.62h2.25v2.25h-2.25zM203.57 642.88h2.25v2.25h-2.25zM205.82 642.88h2.25v2.25h-2.25zM210.32 642.88h2.25v2.25h-2.25zM219.32 642.88h2.25v2.25h-2.25zM221.57 642.88h2.25v2.25h-2.25zM226.07 642.88h2.25v2.25h-2.25zM277.82 642.88h2.25v2.25h-2.25zM280.07 642.88h2.25v2.25h-2.25zM293.57 642.88h2.25v2.25h-2.25zM210.32 645.12h2.25v2.25h-2.25zM214.82 645.12h2.25v2.25h-2.25zM223.82 645.12h2.25v2.25h-2.25zM226.07 645.12h2.25v2.25h-2.25zM280.07 645.12h2.25v2.25h-2.25zM286.82 645.12h2.25v2.25h-2.25zM291.32 645.12h2.25v2.25h-2.25zM192.32 647.38h2.25v2.25h-2.25zM201.32 647.38h2.25v2.25h-2.25zM203.57 647.38h2.25v2.25h-2.25zM212.57 647.38h2.25v2.25h-2.25zM217.07 647.38h2.25v2.25h-2.25zM223.82 647.38h2.25v2.25h-2.25zM286.82 647.38h2.25v2.25h-2.25zM289.07 647.38h2.25v2.25h-2.25zM194.57 649.62h2.25v2.25h-2.25zM219.32 649.62h2.25v2.25h-2.25zM284.57 649.62h2.25v2.25h-2.25zM291.32 649.62h2.25v2.25h-2.25zM192.32 651.88h2.25v2.25h-2.25zM208.07 651.88h2.25v2.25h-2.25zM212.57 651.88h2.25v2.25h-2.25zM217.07 651.88h2.25v2.25h-2.25zM221.57 651.88h2.25v2.25h-2.25zM194.57 654.12h2.25v2.25h-2.25zM217.07 654.12h2.25v2.25h-2.25zM219.32 654.12h2.25v2.25h-2.25zM196.82 656.38h2.25v2.25h-2.25zM199.07 656.38h2.25v2.25h-2.25zM201.32 656.38h2.25v2.25h-2.25zM210.32 656.38h2.25v2.25h-2.25zM196.82 658.62h2.25v2.25h-2.25zM214.82 658.62h2.25v2.25h-2.25zM217.07 658.62h2.25v2.25h-2.25zM291.32 658.62h2.25v2.25h-2.25zM183.32 660.88h2.25v2.25h-2.25zM190.07 660.88h2.25v2.25h-2.25zM196.82 660.88h2.25v2.25h-2.25zM210.32 660.88h2.25v2.25h-2.25zM293.57 660.88h2.25v2.25h-2.25zM190.07 663.12h2.25v2.25h-2.25zM192.32 663.12h2.25v2.25h-2.25zM199.07 663.12h2.25v2.25h-2.25zM201.32 663.12h2.25v2.25h-2.25zM203.57 663.12h2.25v2.25h-2.25zM210.32 663.12h2.25v2.25h-2.25zM212.57 663.12h2.25v2.25h-2.25zM214.82 663.12h2.25v2.25h-2.25zM217.07 663.12h2.25v2.25h-2.25zM289.07 663.12h2.25v2.25h-2.25zM196.82 665.38h2.25v2.25h-2.25zM212.57 665.38h2.25v2.25h-2.25zM214.82 665.38h2.25v2.25h-2.25zM291.32 665.38h2.25v2.25h-2.25zM293.57 665.38h2.25v2.25h-2.25zM295.82 665.38h2.25v2.25h-2.25zM205.82 667.62h2.25v2.25h-2.25zM212.57 667.62h2.25v2.25h-2.25zM214.82 667.62h2.25v2.25h-2.25zM298.07 667.62h2.25v2.25h-2.25zM203.57 669.88h2.25v2.25h-2.25zM214.82 669.88h2.25v2.25h-2.25zM181.07 672.12h2.25v2.25h-2.25zM187.82 672.12h2.25v2.25h-2.25zM190.07 672.12h2.25v2.25h-2.25zM203.57 672.12h2.25v2.25h-2.25zM210.32 672.12h2.25v2.25h-2.25zM212.57 672.12h2.25v2.25h-2.25zM214.82 672.12h2.25v2.25h-2.25zM194.57 674.38h2.25v2.25h-2.25zM201.32 674.38h2.25v2.25h-2.25zM205.82 674.38h2.25v2.25h-2.25zM291.32 674.38h2.25v2.25h-2.25zM293.57 674.38h2.25v2.25h-2.25zM199.07 676.62h2.25v2.25h-2.25zM201.32 676.62h2.25v2.25h-2.25zM203.57 676.62h2.25v2.25h-2.25zM212.57 676.62h2.25v2.25h-2.25zM192.32 678.88h2.25v2.25h-2.25zM203.57 678.88h2.25v2.25h-2.25zM210.32 678.88h2.25v2.25h-2.25zM217.07 678.88h2.25v2.25h-2.25zM210.32 681.12h2.25v2.25h-2.25zM212.57 681.12h2.25v2.25h-2.25zM217.07 681.12h2.25v2.25h-2.25zM194.57 683.38h2.25v2.25h-2.25zM196.82 683.38h2.25v2.25h-2.25zM212.57 683.38h2.25v2.25h-2.25zM214.82 683.38h2.25v2.25h-2.25zM219.32 683.38h2.25v2.25h-2.25zM190.07 685.62h2.25v2.25h-2.25zM194.57 685.62h2.25v2.25h-2.25zM205.82 685.62h2.25v2.25h-2.25zM210.32 685.62h2.25v2.25h-2.25zM214.82 685.62h2.25v2.25h-2.25zM201.32 687.88h2.25v2.25h-2.25zM205.82 687.88h2.25v2.25h-2.25zM208.07 687.88h2.25v2.25h-2.25zM210.32 687.88h2.25v2.25h-2.25zM214.82 687.88h2.25v2.25h-2.25zM221.57 687.88h2.25v2.25h-2.25zM284.57 687.88h2.25v2.25h-2.25zM201.32 690.12h2.25v2.25h-2.25zM203.57 690.12h2.25v2.25h-2.25zM205.82 690.12h2.25v2.25h-2.25zM208.07 690.12h2.25v2.25h-2.25zM210.32 690.12h2.25v2.25h-2.25zM212.57 690.12h2.25v2.25h-2.25zM214.82 690.12h2.25v2.25h-2.25zM219.32 690.12h2.25v2.25h-2.25zM201.32 692.38h2.25v2.25h-2.25zM208.07 692.38h2.25v2.25h-2.25zM219.32 692.38h2.25v2.25h-2.25zM221.57 692.38h2.25v2.25h-2.25zM219.32 694.62h2.25v2.25h-2.25zM223.82 694.62h2.25v2.25h-2.25zM203.57 696.88h2.25v2.25h-2.25zM221.57 696.88h2.25v2.25h-2.25zM223.82 696.88h2.25v2.25h-2.25zM228.32 696.88h2.25v2.25h-2.25zM201.32 699.12h2.25v2.25h-2.25zM223.82 699.12h2.25v2.25h-2.25zM226.07 699.12h2.25v2.25h-2.25zM219.32 701.38h2.25v2.25h-2.25zM226.07 701.38h2.25v2.25h-2.25zM230.57 701.38h2.25v2.25h-2.25zM235.07 701.38h2.25v2.25h-2.25zM271.07 701.38h2.25v2.25h-2.25zM273.32 701.38h2.25v2.25h-2.25zM275.57 701.38h2.25v2.25h-2.25zM201.32 703.62h2.25v2.25h-2.25zM210.32 703.62h2.25v2.25h-2.25zM212.57 703.62h2.25v2.25h-2.25zM214.82 703.62h2.25v2.25h-2.25zM221.57 703.62h2.25v2.25h-2.25zM228.32 703.62h2.25v2.25h-2.25zM230.57 703.62h2.25v2.25h-2.25zM232.82 703.62h2.25v2.25h-2.25zM268.82 703.62h2.25v2.25h-2.25zM217.07 705.88h2.25v2.25h-2.25zM221.57 705.88h2.25v2.25h-2.25zM223.82 705.88h2.25v2.25h-2.25zM230.57 705.88h2.25v2.25h-2.25zM237.32 705.88h2.25v2.25h-2.25zM239.57 705.88h2.25v2.25h-2.25zM241.82 705.88h2.25v2.25h-2.25zM250.82 705.88h2.25v2.25h-2.25zM257.57 705.88h2.25v2.25h-2.25zM264.32 705.88h2.25v2.25h-2.25zM217.07 708.12h2.25v2.25h-2.25zM221.57 708.12h2.25v2.25h-2.25zM237.32 708.12h2.25v2.25h-2.25zM246.32 708.12h2.25v2.25h-2.25zM253.07 708.12h2.25v2.25h-2.25zM210.32 710.38h2.25v2.25h-2.25zM212.57 710.38h2.25v2.25h-2.25zM219.32 710.38h2.25v2.25h-2.25zM232.82 710.38h2.25v2.25h-2.25zM235.07 710.38h2.25v2.25h-2.25zM239.57 710.38h2.25v2.25h-2.25zM246.32 710.38h2.25v2.25h-2.25zM253.07 710.38h2.25v2.25h-2.25zM210.32 712.62h2.25v2.25h-2.25zM219.32 712.62h2.25v2.25h-2.25zM221.57 712.62h2.25v2.25h-2.25zM235.07 712.62h2.25v2.25h-2.25zM250.82 712.62h2.25v2.25h-2.25zM219.32 714.88h2.25v2.25h-2.25zM221.57 714.88h2.25v2.25h-2.25zM226.07 714.88h2.25v2.25h-2.25zM250.82 714.88h2.25v2.25h-2.25zM237.32 717.12h2.25v2.25h-2.25z"/>
<path fill="#00bfff" d="M237.32 593.38h2.25v2.25h-2.25zM244.07 593.38h2.25v2.25h-2.25zM255.32 595.62h2.25v2.25h-2.25zM221.57 597.88h2.25v2.25h-2.25zM237.32 597.88h2.25v2.25h-2.25zM241.82 597.88h2.25v2.25h-2.25zM248.57 597.88h2.25v2.25h-2.25zM235.07 600.12h2.25v2.25h-2.25zM246.32 600.12h2.25v2.25h-2.25zM250.82 600.12h2.25v2.25h-2.25zM268.82 600.12h2.25v2.25h-2.25zM214.82 602.38h2.25v2.25h-2.25zM232.82 602.38h2.25v2.25h-2.25zM239.57 602.38h2.25v2.25h-2.25zM246.32 602.38h2.25v2.25h-2.25zM255.32 602.38h2.25v2.25h-2.25zM223.82 604.62h2.25v2.25h-2.25zM228.32 604.62h2.25v2.25h-2.25zM230.57 604.62h2.25v2.25h-2.25zM250.82 604.62h2.25v2.25h-2.25zM257.57 604.62h2.25v2.25h-2.25zM264.32 604.62h2.25v2.25h-2.25zM223.82 606.88h2.25v2.25h-2.25zM226.07 606.88h2.25v2.25h-2.25zM244.07 606.88h2.25v2.25h-2.25zM253.07 606.88h2.25v2.25h-2.25zM257.57 606.88h2.25v2.25h-2.25zM264.32 606.88h2.25v2.25h-2.25zM226.07 609.12h2.25v2.25h-2.25zM237.32 609.12h2.25v2.25h-2.25zM241.82 609.12h2.25v2.25h-2.25zM248.57 609.12h2.25v2.25h-2.25zM255.32 609.12h2.25v2.25h-2.25zM219.32 611.38h2.25v2.25h-2.25zM237.32 611.38h2.25v2.25h-2.25zM255.32 611.38h2.25v2.25h-2.25zM280.07 611.38h2.25v2.25h-2.25zM219.32 613.62h2.25v2.25h-2.25zM232.82 613.62h2.25v2.25h-2.25zM235.07 613.62h2.25v2.25h-2.25zM237.32 613.62h2.25v2.25h-2.25zM239.57 613.62h2.25v2.25h-2.25zM244.07 613.62h2.25v2.25h-2.25zM248.57 613.62h2.25v2.25h-2.25zM255.32 613.62h2.25v2.25h-2.25zM257.57 613.62h2.25v2.25h-2.25zM259.82 613.62h2.25v2.25h-2.25zM271.07 613.62h2.25v2.25h-2.25zM273.32 613.62h2.25v2.25h-2.25zM214.82 615.88h2.25v2.25h-2.25zM228.32 615.88h2.25v2.25h-2.25zM237.32 615.88h2.25v2.25h-2.25zM239.57 615.88h2.25v2.25h-2.25zM241.82 615.88h2.25v2.25h-2.25zM244.07 615.88h2.25v2.25h-2.25zM246.32 615.88h2.25v2.25h-2.25zM248.57 615.88h2.25v2.25h-2.25zM250.82 615.88h2.25v2.25h-2.25zM257.57 615.88h2.25v2.25h-2.25zM280.07 615.88h2.25v2.25h-2.25zM205.82 618.12h2.25v2.25h-2.25zM208.07 618.12h2.25v2.25h-2.25zM214.82 618.12h2.25v2.25h-2.25zM219.32 618.12h2.25v2.25h-2.25zM221.57 618.12h2.25v2.25h-2.25zM223.82 618.12h2.25v2.25h-2.25zM226.07 618.12h2.25v2.25h-2.25zM230.57 618.12h2.25v2.25h-2.25zM235.07 618.12h2.25v2.25h-2.25zM239.57 618.12h2.25v2.25h-2.25zM241.82 618.12h2.25v2.25h-2.25zM244.07 618.12h2.25v2.25h-2.25zM250.82 618.12h2.25v2.25h-2.25zM257.57 618.12h2.25v2.25h-2.25zM259.82 618.12h2.25v2.25h-2.25zM262.07 618.12h2.25v2.25h-2.25zM264.32 618.12h2.25v2.25h-2.25zM266.57 618.12h2.25v2.25h-2.25zM280.07 618.12h2.25v2.25h-2.25zM205.82 620.38h2.25v2.25h-2.25zM223.82 620.38h2.25v2.25h-2.25zM235.07 620.38h2.25v2.25h-2.25zM237.32 620.38h2.25v2.25h-2.25zM239.57 620.38h2.25v2.25h-2.25zM241.82 620.38h2.25v2.25h-2.25zM246.32 620.38h2.25v2.25h-2.25zM250.82 620.38h2.25v2.25h-2.25zM257.57 620.38h2.25v2.25h-2.25zM262.07 620.38h2.25v2.25h-2.25zM266.57 620.38h2.25v2.25h-2.25zM268.82 620.38h2.25v2.25h-2.25zM271.07 620.38h2.25v2.25h-2.25zM277.82 620.38h2.25v2.25h-2.25zM205.82 622.62h2.25v2.25h-2.25zM214.82 622.62h2.25v2.25h-2.25zM217.07 622.62h2.25v2.25h-2.25zM228.32 622.62h2.25v2.25h-2.25zM232.82 622.62h2.25v2.25h-2.25zM235.07 622.62h2.25v2.25h-2.25zM241.82 622.62h2.25v2.25h-2.25zM255.32 622.62h2.25v2.25h-2.25zM266.57 622.62h2.25v2.25h-2.25zM268.82 622.62h2.25v2.25h-2.25zM273.32 622.62h2.25v2.25h-2.25zM275.57 622.62h2.25v2.25h-2.25zM208.07 624.88h2.25v2.25h-2.25zM214.82 624.88h2.25v2.25h-2.25zM217.07 624.88h2.25v2.25h-2.25zM223.82 624.88h2.25v2.25h-2.25zM226.07 624.88h2.25v2.25h-2.25zM230.57 624.88h2.25v2.25h-2.25zM232.82 624.88h2.25v2.25h-2.25zM241.82 624.88h2.25v2.25h-2.25zM246.32 624.88h2.25v2.25h-2.25zM248.57 624.88h2.25v2.25h-2.25zM253.07 624.88h2.25v2.25h-2.25zM255.32 624.88h2.25v2.25h-2.25zM259.82 624.88h2.25v2.25h-2.25zM266.57 624.88h2.25v2.25h-2.25zM277.82 624.88h2.25v2.25h-2.25zM203.57 627.12h2.25v2.25h-2.25zM210.32 627.12h2.25v2.25h-2.25zM219.32 627.12h2.25v2.25h-2.25zM221.57 627.12h2.25v2.25h-2.25zM223.82 627.12h2.25v2.25h-2.25zM226.07 627.12h2.25v2.25h-2.25zM230.57 627.12h2.25v2.25h-2.25zM237.32 627.12h2.25v2.25h-2.25zM241.82 627.12h2.25v2.25h-2.25zM244.07 627.12h2.25v2.25h-2.25zM246.32 627.12h2.25v2.25h-2.25zM250.82 627.12h2.25v2.25h-2.25zM253.07 627.12h2.25v2.25h-2.25zM257.57 627.12h2.25v2.25h-2.25zM259.82 627.12h2.25v2.25h-2.25zM262.07 627.12h2.25v2.25h-2.25zM264.32 627.12h2.25v2.25h-2.25zM271.07 627.12h2.25v2.25h-2.25zM273.32 627.12h2.25v2.25h-2.25zM275.57 627.12h2.25v2.25h-2.25zM277.82 627.12h2.25v2.25h-2.25zM203.57 629.38h2.25v2.25h-2.25zM217.07 629.38h2.25v2.25h-2.25zM219.32 629.38h2.25v2.25h-2.25zM223.82 629.38h2.25v2.25h-2.25zM237.32 629.38h2.25v2.25h-2.25zM264.32 629.38h2.25v2.25h-2.25zM266.57 629.38h2.25v2.25h-2.25zM275.57 629.38h2.25v2.25h-2.25zM277.82 629.38h2.25v2.25h-2.25zM282.32 629.38h2.25v2.25h-2.25zM208.07 631.62h2.25v2.25h-2.25zM212.57 631.62h2.25v2.25h-2.25zM217.07 631.62h2.25v2.25h-2.25zM223.82 631.62h2.25v2.25h-2.25zM230.57 631.62h2.25v2.25h-2.25zM232.82 631.62h2.25v2.25h-2.25zM235.07 631.62h2.25v2.25h-2.25zM239.57 631.62h2.25v2.25h-2.25zM248.57 631.62h2.25v2.25h-2.25zM250.82 631.62h2.25v2.25h-2.25zM271.07 631.62h2.25v2.25h-2.25zM273.32 631.62h2.25v2.25h-2.25zM196.82 633.88h2.25v2.25h-2.25zM201.32 633.88h2.25v2.25h-2.25zM205.82 633.88h2.25v2.25h-2.25zM208.07 633.88h2.25v2.25h-2.25zM214.82 633.88h2.25v2.25h-2.25zM219.32 633.88h2.25v2.25h-2.25zM226.07 633.88h2.25v2.25h-2.25zM230.57 633.88h2.25v2.25h-2.25zM241.82 633.88h2.25v2.25h-2.25zM246.32 633.88h2.25v2.25h-2.25zM266.57 633.88h2.25v2.25h-2.25zM205.82 636.12h2.25v2.25h-2.25zM208.07 636.12h2.25v2.25h-2.25zM210.32 636.12h2.25v2.25h-2.25zM214.82 636.12h2.25v2.25h-2.25zM219.32 636.12h2.25v2.25h-2.25zM268.82 636.12h2.25v2.25h-2.25zM271.07 636.12h2.25v2.25h-2.25zM273.32 636.12h2.25v2.25h-2.25zM284.57 636.12h2.25v2.25h-2.25zM194.57 638.38h2.25v2.25h-2.25zM201.32 638.38h2.25v2.25h-2.25zM210.32 638.38h2.25v2.25h-2.25zM214.82 638.38h2.25v2.25h-2.25zM219.32 638.38h2.25v2.25h-2.25zM228.32 638.38h2.25v2.25h-2.25zM192.32 640.62h2.25v2.25h-2.25zM196.82 640.62h2.25v2.25h-2.25zM201.32 640.62h2.25v2.25h-2.25zM210.32 640.62h2.25v2.25h-2.25zM212.57 640.62h2.25v2.25h-2.25zM217.07 640.62h2.25v2.25h-2.25zM223.82 640.62h2.25v2.25h-2.25zM228.32 640.62h2.25v2.25h-2.25zM230.57 640.62h2.25v2.25h-2.25zM185.57 642.88h2.25v2.25h-2.25zM199.07 642.88h2.25v2.25h-2.25zM201.32 642.88h2.25v2.25h-2.25zM208.07 642.88h2.25v2.25h-2.25zM295.82 642.88h2.25v2.25h-2.25zM199.07 645.12h2.25v2.25h-2.25zM201.32 645.12h2.25v2.25h-2.25zM203.57 645.12h2.25v2.25h-2.25zM205.82 645.12h2.25v2.25h-2.25zM208.07 645.12h2.25v2.25h-2.25zM212.57 645.12h2.25v2.25h-2.25zM217.07 645.12h2.25v2.25h-2.25zM199.07 647.38h2.25v2.25h-2.25zM205.82 647.38h2.25v2.25h-2.25zM208.07 647.38h2.25v2.25h-2.25zM210.32 647.38h2.25v2.25h-2.25zM214.82 647.38h2.25v2.25h-2.25zM219.32 647.38h2.25v2.25h-2.25zM291.32 647.38h2.25v2.25h-2.25zM192.32 649.62h2.25v2.25h-2.25zM196.82 649.62h2.25v2.25h-2.25zM201.32 649.62h2.25v2.25h-2.25zM203.57 649.62h2.25v2.25h-2.25zM208.07 649.62h2.25v2.25h-2.25zM210.32 649.62h2.25v2.25h-2.25zM212.57 649.62h2.25v2.25h-2.25zM217.07 649.62h2.25v2.25h-2.25zM221.57 649.62h2.25v2.25h-2.25zM289.07 649.62h2.25v2.25h-2.25zM295.82 649.62h2.25v2.25h-2.25zM181.07 651.88h2.25v2.25h-2.25zM201.32 651.88h2.25v2.25h-2.25zM205.82 651.88h2.25v2.25h-2.25zM214.82 651.88h2.25v2.25h-2.25zM286.82 651.88h2.25v2.25h-2.25zM289.07 651.88h2.25v2.25h-2.25zM291.32 651.88h2.25v2.25h-2.25zM295.82 651.88h2.25v2.25h-2.25zM203.57 654.12h2.25v2.25h-2.25zM205.82 654.12h2.25v2.25h-2.25zM210.32 654.12h2.25v2.25h-2.25zM214.82 654.12h2.25v2.25h-2.25zM289.07 654.12h2.25v2.25h-2.25zM192.32 656.38h2.25v2.25h-2.25zM194.57 656.38h2.25v2.25h-2.25zM203.57 656.38h2.25v2.25h-2.25zM212.57 656.38h2.25v2.25h-2.25zM214.82 656.38h2.25v2.25h-2.25zM178.82 658.62h2.25v2.25h-2.25zM187.82 658.62h2.25v2.25h-2.25zM201.32 658.62h2.25v2.25h-2.25zM203.57 658.62h2.25v2.25h-2.25zM205.82 658.62h2.25v2.25h-2.25zM210.32 658.62h2.25v2.25h-2.25zM212.57 658.62h2.25v2.25h-2.25zM295.82 658.62h2.25v2.25h-2.25zM187.82 660.88h2.25v2.25h-2.25zM199.07 660.88h2.25v2.25h-2.25zM201.32 660.88h2.25v2.25h-2.25zM203.57 660.88h2.25v2.25h-2.25zM205.82 660.88h2.25v2.25h-2.25zM208.07 660.88h2.25v2.25h-2.25zM212.57 660.88h2.25v2.25h-2.25zM214.82 660.88h2.25v2.25h-2.25zM217.07 660.88h2.25v2.25h-2.25zM291.32 660.88h2.25v2.25h-2.25zM298.07 660.88h2.25v2.25h-2.25zM208.07 663.12h2.25v2.25h-2.25zM293.57 663.12h2.25v2.25h-2.25zM298.07 663.12h2.25v2.25h-2.25zM185.57 665.38h2.25v2.25h-2.25zM192.32 665.38h2.25v2.25h-2.25zM194.57 665.38h2.25v2.25h-2.25zM201.32 665.38h2.25v2.25h-2.25zM203.57 665.38h2.25v2.25h-2.25zM208.07 665.38h2.25v2.25h-2.25zM210.32 665.38h2.25v2.25h-2.25zM192.32 667.62h2.25v2.25h-2.25zM194.57 667.62h2.25v2.25h-2.25zM196.82 667.62h2.25v2.25h-2.25zM199.07 667.62h2.25v2.25h-2.25zM203.57 667.62h2.25v2.25h-2.25zM208.07 667.62h2.25v2.25h-2.25zM210.32 667.62h2.25v2.25h-2.25zM291.32 667.62h2.25v2.25h-2.25zM192.32 669.88h2.25v2.25h-2.25zM194.57 669.88h2.25v2.25h-2.25zM196.82 669.88h2.25v2.25h-2.25zM199.07 669.88h2.25v2.25h-2.25zM201.32 669.88h2.25v2.25h-2.25zM210.32 669.88h2.25v2.25h-2.25zM293.57 669.88h2.25v2.25h-2.25zM194.57 672.12h2.25v2.25h-2.25zM196.82 672.12h2.25v2.25h-2.25zM199.07 672.12h2.25v2.25h-2.25zM201.32 672.12h2.25v2.25h-2.25zM291.32 672.12h2.25v2.25h-2.25zM295.82 672.12h2.25v2.25h-2.25zM185.57 674.38h2.25v2.25h-2.25zM187.82 674.38h2.25v2.25h-2.25zM190.07 674.38h2.25v2.25h-2.25zM196.82 674.38h2.25v2.25h-2.25zM199.07 674.38h2.25v2.25h-2.25zM203.57 674.38h2.25v2.25h-2.25zM212.57 674.38h2.25v2.25h-2.25zM214.82 674.38h2.25v2.25h-2.25zM194.57 676.62h2.25v2.25h-2.25zM196.82 676.62h2.25v2.25h-2.25zM205.82 676.62h2.25v2.25h-2.25zM210.32 676.62h2.25v2.25h-2.25zM194.57 678.88h2.25v2.25h-2.25zM201.32 678.88h2.25v2.25h-2.25zM205.82 678.88h2.25v2.25h-2.25zM208.07 678.88h2.25v2.25h-2.25zM190.07 681.12h2.25v2.25h-2.25zM192.32 681.12h2.25v2.25h-2.25zM194.57 681.12h2.25v2.25h-2.25zM199.07 681.12h2.25v2.25h-2.25zM203.57 681.12h2.25v2.25h-2.25zM205.82 681.12h2.25v2.25h-2.25zM214.82 681.12h2.25v2.25h-2.25zM190.07 683.38h2.25v2.25h-2.25zM199.07 683.38h2.25v2.25h-2.25zM205.82 683.38h2.25v2.25h-2.25zM208.07 683.38h2.25v2.25h-2.25zM187.82 685.62h2.25v2.25h-2.25zM192.32 685.62h2.25v2.25h-2.25zM196.82 685.62h2.25v2.25h-2.25zM201.32 685.62h2.25v2.25h-2.25zM203.57 685.62h2.25v2.25h-2.25zM212.57 685.62h2.25v2.25h-2.25zM217.07 685.62h2.25v2.25h-2.25zM196.82 687.88h2.25v2.25h-2.25zM194.57 690.12h2.25v2.25h-2.25zM199.07 690.12h2.25v2.25h-2.25zM217.07 690.12h2.25v2.25h-2.25zM199.07 692.38h2.25v2.25h-2.25zM205.82 692.38h2.25v2.25h-2.25zM210.32 692.38h2.25v2.25h-2.25zM212.57 692.38h2.25v2.25h-2.25zM214.82 692.38h2.25v2.25h-2.25zM217.07 692.38h2.25v2.25h-2.25zM203.57 694.62h2.25v2.25h-2.25zM208.07 694.62h2.25v2.25h-2.25zM210.32 694.62h2.25v2.25h-2.25zM217.07 694.62h2.25v2.25h-2.25zM221.57 694.62h2.25v2.25h-2.25zM226.07 694.62h2.25v2.25h-2.25zM217.07 696.88h2.25v2.25h-2.25zM219.32 696.88h2.25v2.25h-2.25zM226.07 696.88h2.25v2.25h-2.25zM205.82 699.12h2.25v2.25h-2.25zM212.57 699.12h2.25v2.25h-2.25zM214.82 699.12h2.25v2.25h-2.25zM217.07 699.12h2.25v2.25h-2.25zM219.32 699.12h2.25v2.25h-2.25zM221.57 699.12h2.25v2.25h-2.25zM208.07 701.38h2.25v2.25h-2.25zM210.32 701.38h2.25v2.25h-2.25zM212.57 701.38h2.25v2.25h-2.25zM214.82 701.38h2.25v2.25h-2.25zM223.82 701.38h2.25v2.25h-2.25zM232.82 701.38h2.25v2.25h-2.25zM203.57 703.62h2.25v2.25h-2.25zM205.82 703.62h2.25v2.25h-2.25zM208.07 703.62h2.25v2.25h-2.25zM217.07 703.62h2.25v2.25h-2.25zM223.82 703.62h2.25v2.25h-2.25zM235.07 703.62h2.25v2.25h-2.25zM239.57 703.62h2.25v2.25h-2.25zM210.32 705.88h2.25v2.25h-2.25zM214.82 705.88h2.25v2.25h-2.25zM226.07 705.88h2.25v2.25h-2.25zM232.82 705.88h2.25v2.25h-2.25zM246.32 705.88h2.25v2.25h-2.25zM255.32 705.88h2.25v2.25h-2.25zM266.57 705.88h2.25v2.25h-2.25zM268.82 705.88h2.25v2.25h-2.25zM205.82 708.12h2.25v2.25h-2.25zM210.32 708.12h2.25v2.25h-2.25zM212.57 708.12h2.25v2.25h-2.25zM214.82 708.12h2.25v2.25h-2.25zM223.82 708.12h2.25v2.25h-2.25zM228.32 708.12h2.25v2.25h-2.25zM230.57 708.12h2.25v2.25h-2.25zM232.82 708.12h2.25v2.25h-2.25zM235.07 708.12h2.25v2.25h-2.25zM244.07 708.12h2.25v2.25h-2.25zM248.57 708.12h2.25v2.25h-2.25zM257.57 708.12h2.25v2.25h-2.25zM264.32 708.12h2.25v2.25h-2.25zM268.82 708.12h2.25v2.25h-2.25zM214.82 710.38h2.25v2.25h-2.25zM223.82 710.38h2.25v2.25h-2.25zM226.07 710.38h2.25v2.25h-2.25zM228.32 710.38h2.25v2.25h-2.25zM244.07 710.38h2.25v2.25h-2.25zM248.57 710.38h2.25v2.25h-2.25zM264.32 710.38h2.25v2.25h-2.25zM201.32 712.62h2.25v2.25h-2.25zM212.57 712.62h2.25v2.25h-2.25zM217.07 712.62h2.25v2.25h-2.25zM226.07 712.62h2.25v2.25h-2.25zM228.32 712.62h2.25v2.25h-2.25zM230.57 712.62h2.25v2.25h-2.25zM232.82 712.62h2.25v2.25h-2.25zM239.57 712.62h2.25v2.25h-2.25zM244.07 712.62h2.25v2.25h-2.25zM253.07 712.62h2.25v2.25h-2.25zM259.82 712.62h2.25v2.25h-2.25zM262.07 712.62h2.25v2.25h-2.25zM217.07 714.88h2.25v2.25h-2.25zM228.32 714.88h2.25v2.25h-2.25zM230.57 714.88h2.25v2.25h-2.25zM232.82 714.88h2.25v2.25h-2.25zM239.57 714.88h2.25v2.25h-2.25zM255.32 714.88h2.25v2.25h-2.25zM214.82 717.12h2.25v2.25h-2.25zM219.32 717.12h2.25v2.25h-2.25zM230.57 717.12h2.25v2.25h-2.25z"/>
<path fill="#10aa20" d="M237.32 595.62h2.25v2.25h-2.25zM226.07 600.12h2.25v2.25h-2.25zM255.32 604.62h2.25v2.25h-2.25zM271.07 618.12h2.25v2.25h-2.25zM286.82 620.38h2.25v2.25h-2.25zM223.82 622.62h2.25v2.25h-2.25zM239.57 622.62h2.25v2.25h-2.25zM280.07 624.88h2.25v2.25h-2.25zM259.82 629.38h2.25v2.25h-2.25zM232.82 633.88h2.25v2.25h-2.25zM196.82 645.12h2.25v2.25h-2.25zM201.32 654.12h2.25v2.25h-2.25zM201.32 667.62h2.25v2.25h-2.25zM208.07 681.12h2.25v2.25h-2.25zM199.07 687.88h2.25v2.25h-2.25zM219.32 687.88h2.25v2.25h-2.25zM219.32 705.88h2.25v2.25h-2.25z"/>
<path fill="#00ff00" d="M230.57 602.38h2.25v2.25h-2.25zM268.82 604.62h2.25v2.25h-2.25zM230.57 609.12h2.25v2.25h-2.25zM232.82 609.12h2.25v2.25h-2.25zM259.82 609.12h2.25v2.25h-2.25zM223.82 611.38h2.25v2.25h-2.25zM266.57 613.62h2.25v2.25h-2.25zM237.32 618.12h2.25v2.25h-2.25zM253.07 620.38h2.25v2.25h-2.25zM221.57 622.62h2.25v2.25h-2.25zM244.07 624.88h2.25v2.25h-2.25zM271.07 629.38h2.25v2.25h-2.25zM219.32 631.62h2.25v2.25h-2.25zM277.82 631.62h2.25v2.25h-2.25zM228.32 633.88h2.25v2.25h-2.25zM273.32 633.88h2.25v2.25h-2.25zM282.32 633.88h2.25v2.25h-2.25zM237.32 636.12h2.25v2.25h-2.25zM205.82 638.38h2.25v2.25h-2.25zM235.07 638.38h2.25v2.25h-2.25zM275.57 638.38h2.25v2.25h-2.25zM208.07 640.62h2.25v2.25h-2.25zM221.57 640.62h2.25v2.25h-2.25zM228.32 642.88h2.25v2.25h-2.25zM219.32 645.12h2.25v2.25h-2.25zM298.07 647.38h2.25v2.25h-2.25zM205.82 649.62h2.25v2.25h-2.25zM214.82 649.62h2.25v2.25h-2.25zM293.57 649.62h2.25v2.25h-2.25zM199.07 651.88h2.25v2.25h-2.25zM208.07 654.12h2.25v2.25h-2.25zM295.82 656.38h2.25v2.25h-2.25zM208.07 658.62h2.25v2.25h-2.25zM295.82 669.88h2.25v2.25h-2.25zM201.32 681.12h2.25v2.25h-2.25zM208.07 685.62h2.25v2.25h-2.25zM187.82 687.88h2.25v2.25h-2.25zM217.07 687.88h2.25v2.25h-2.25zM205.82 696.88h2.25v2.25h-2.25zM228.32 701.38h2.25v2.25h-2.25zM230.57 710.38h2.25v2.25h-2.25zM257.57 714.88h2.25v2.25h-2.25z"/>
<path fill="#0000cd" d="M266.57 602.38h2.25v2.25h-2.25zM250.82 606.88h2.25v2.25h-2.25zM271.07 606.88h2.25v2.25h-2.25zM219.32 609.12h2.25v2.25h-2.25zM230.57 611.38h2.25v2.25h-2.25zM264.32 613.62h2.25v2.25h-2.25zM230.57 615.88h2.25v2.25h-2.25zM268.82 615.88h2.25v2.25h-2.25zM210.32 618.12h2.25v2.25h-2.25zM232.82 618.12h2.25v2.25h-2.25zM219.32 620.38h2.25v2.25h-2.25zM228.32 620.38h2.25v2.25h-2.25zM232.82 620.38h2.25v2.25h-2.25zM248.57 620.38h2.25v2.25h-2.25zM259.82 620.38h2.25v2.25h-2.25zM210.32 622.62h2.25v2.25h-2.25zM226.07 622.62h2.25v2.25h-2.25zM230.57 622.62h2.25v2.25h-2.25zM250.82 622.62h2.25v2.25h-2.25zM221.57 624.88h2.25v2.25h-2.25zM264.32 624.88h2.25v2.25h-2.25zM286.82 624.88h2.25v2.25h-2.25zM291.32 624.88h2.25v2.25h-2.25zM232.82 627.12h2.25v2.25h-2.25zM239.57 627.12h2.25v2.25h-2.25zM248.57 627.12h2.25v2.25h-2.25zM266.57 627.12h2.25v2.25h-2.25zM280.07 627.12h2.25v2.25h-2.25zM284.57 627.12h2.25v2.25h-2.25zM239.57 629.38h2.25v2.25h-2.25zM244.07 629.38h2.25v2.25h-2.25zM262.07 629.38h2.25v2.25h-2.25zM280.07 629.38h2.25v2.25h-2.25zM284.57 629.38h2.25v2.25h-2.25zM214.82 631.62h2.25v2.25h-2.25zM246.32 631.62h2.25v2.25h-2.25zM255.32 631.62h2.25v2.25h-2.25zM268.82 631.62h2.25v2.25h-2.25zM275.57 631.62h2.25v2.25h-2.25zM280.07 631.62h2.25v2.25h-2.25zM286.82 631.62h2.25v2.25h-2.25zM221.57 633.88h2.25v2.25h-2.25zM259.82 633.88h2.25v2.25h-2.25zM262.07 633.88h2.25v2.25h-2.25zM275.57 633.88h2.25v2.25h-2.25zM212.57 636.12h2.25v2.25h-2.25zM226.07 636.12h2.25v2.25h-2.25zM277.82 636.12h2.25v2.25h-2.25zM289.07 636.12h2.25v2.25h-2.25zM208.07 638.38h2.25v2.25h-2.25zM230.57 638.38h2.25v2.25h-2.25zM271.07 638.38h2.25v2.25h-2.25zM273.32 638.38h2.25v2.25h-2.25zM277.82 638.38h2.25v2.25h-2.25zM214.82 640.62h2.25v2.25h-2.25zM219.32 640.62h2.25v2.25h-2.25zM226.07 640.62h2.25v2.25h-2.25zM284.57 640.62h2.25v2.25h-2.25zM289.07 640.62h2.25v2.25h-2.25zM293.57 640.62h2.25v2.25h-2.25zM217.07 642.88h2.25v2.25h-2.25zM223.82 642.88h2.25v2.25h-2.25zM282.32 642.88h2.25v2.25h-2.25zM284.57 642.88h2.25v2.25h-2.25zM286.82 642.88h2.25v2.25h-2.25zM289.07 642.88h2.25v2.25h-2.25zM291.32 642.88h2.25v2.25h-2.25zM282.32 645.12h2.25v2.25h-2.25zM284.57 645.12h2.25v2.25h-2.25zM289.07 645.12h2.25v2.25h-2.25zM295.82 645.12h2.25v2.25h-2.25zM300.32 645.12h2.25v2.25h-2.25zM221.57 647.38h2.25v2.25h-2.25zM282.32 647.38h2.25v2.25h-2.25zM284.57 647.38h2.25v2.25h-2.25zM286.82 649.62h2.25v2.25h-2.25zM194.57 651.88h2.25v2.25h-2.25zM284.57 651.88h2.25v2.25h-2.25zM293.57 651.88h2.25v2.25h-2.25zM199.07 654.12h2.25v2.25h-2.25zM212.57 654.12h2.25v2.25h-2.25zM286.82 654.12h2.25v2.25h-2.25zM291.32 654.12h2.25v2.25h-2.25zM293.57 654.12h2.25v2.25h-2.25zM298.07 654.12h2.25v2.25h-2.25zM219.32 656.38h2.25v2.25h-2.25zM286.82 656.38h2.25v2.25h-2.25zM291.32 656.38h2.25v2.25h-2.25zM293.57 656.38h2.25v2.25h-2.25zM289.07 658.62h2.25v2.25h-2.25zM293.57 658.62h2.25v2.25h-2.25zM289.07 660.88h2.25v2.25h-2.25zM295.82 660.88h2.25v2.25h-2.25zM194.57 663.12h2.25v2.25h-2.25zM205.82 663.12h2.25v2.25h-2.25zM291.32 663.12h2.25v2.25h-2.25zM295.82 663.12h2.25v2.25h-2.25zM199.07 665.38h2.25v2.25h-2.25zM293.57 667.62h2.25v2.25h-2.25zM295.82 667.62h2.25v2.25h-2.25zM291.32 669.88h2.25v2.25h-2.25zM300.32 669.88h2.25v2.25h-2.25zM293.57 672.12h2.25v2.25h-2.25zM208.07 674.38h2.25v2.25h-2.25zM210.32 674.38h2.25v2.25h-2.25zM289.07 676.62h2.25v2.25h-2.25zM291.32 676.62h2.25v2.25h-2.25zM293.57 676.62h2.25v2.25h-2.25zM289.07 678.88h2.25v2.25h-2.25zM291.32 678.88h2.25v2.25h-2.25zM201.32 683.38h2.25v2.25h-2.25zM203.57 687.88h2.25v2.25h-2.25zM212.57 687.88h2.25v2.25h-2.25zM221.57 690.12h2.25v2.25h-2.25zM282.32 692.38h2.25v2.25h-2.25zM284.57 692.38h2.25v2.25h-2.25zM199.07 696.88h2.25v2.25h-2.25zM214.82 696.88h2.25v2.25h-2.25zM277.82 696.88h2.25v2.25h-2.25zM219.32 703.62h2.25v2.25h-2.25zM226.07 703.62h2.25v2.25h-2.25zM266.57 703.62h2.25v2.25h-2.25zM248.57 705.88h2.25v2.25h-2.25zM253.07 705.88h2.25v2.25h-2.25zM259.82 705.88h2.25v2.25h-2.25zM262.07 705.88h2.25v2.25h-2.25zM239.57 708.12h2.25v2.25h-2.25zM241.82 708.12h2.25v2.25h-2.25zM250.82 708.12h2.25v2.25h-2.25zM255.32 708.12h2.25v2.25h-2.25zM259.82 708.12h2.25v2.25h-2.25zM262.07 708.12h2.25v2.25h-2.25zM237.32 710.38h2.25v2.25h-2.25zM241.82 710.38h2.25v2.25h-2.25zM250.82 710.38h2.25v2.25h-2.25zM255.32 710.38h2.25v2.25h-2.25zM257.57 710.38h2.25v2.25h-2.25zM259.82 710.38h2.25v2.25h-2.25zM266.57 710.38h2.25v2.25h-2.25zM241.82 712.62h2.25v2.25h-2.25zM246.32 712.62h2.25v2.25h-2.25zM248.57 712.62h2.25v2.25h-2.25zM255.32 712.62h2.25v2.25h-2.25zM237.32 714.88h2.25v2.25h-2.25zM250.82 719.38h2.25v2.25h-2.25z"/>
<path fill="#0c8c1c" d="M266.57 604.62h2.25v2.25h-2.25zM253.07 615.88h2.25v2.25h-2.25zM266.57 615.88h2.25v2.25h-2.25zM244.07 622.62h2.25v2.25h-2.25zM275.57 624.88h2.25v2.25h-2.25zM205.82 627.12h2.25v2.25h-2.25zM214.82 627.12h2.25v2.25h-2.25zM235.07 627.12h2.25v2.25h-2.25zM244.07 631.62h2.25v2.25h-2.25zM266.57 631.62h2.25v2.25h-2.25zM226.07 638.38h2.25v2.25h-2.25zM212.57 642.88h2.25v2.25h-2.25zM214.82 642.88h2.25v2.25h-2.25zM196.82 654.12h2.25v2.25h-2.25zM208.07 656.38h2.25v2.25h-2.25zM289.07 656.38h2.25v2.25h-2.25zM298.07 672.12h2.25v2.25h-2.25zM199.07 678.88h2.25v2.25h-2.25zM203.57 692.38h2.25v2.25h-2.25zM210.32 696.88h2.25v2.25h-2.25z"/>
<path fill="#0c8c1c" d="M233 492h6v7h-6zM265 511h8v6h-8zM203.5 554.5h4v4h-4zM181 566h4v4h-4zM129 586h4v7h-4zM72 704h4v10h-4zM126.5 714.5h4v4h-4zM84.5 737.5h6v6h-6zM108.5 741.5h4v5h-4zM132 745.5h9v5h-9zM112.5 775h7v7h-7zM158 824h6v5h-6zM172 776h9v5h-9zM184 779.5h8v7h-8zM186 787h6v6h-6zM197 788h9v9h-9zM192 800h5v4h-5z"/>
<path fill="#10aa20" d="M195 538.5h5v5h-5zM248.5 532h4v4h-4zM239.5 540h4v4h-4zM252.5 543h4v5h-4zM287.5 541h4v4h-4zM251 551h4v4h-4zM251 558h5v5h-5zM270 556.5h4v4h-4zM280 554h4v4h-4zM289 552h4v4h-4zM313 568h5v4h-5zM390.5 631.5h4v4h-4zM336 615h4v4h-4zM150 764.5h9v4h-9zM156 775.5h6v4h-6zM208.5 802.5h3v4h-3zM229.5 783h4v4h-4z"/>
<path fill="#d06030" d="M198 539h2v2h-2z"/>
<path fill="#a0a0a0" d="M238 552.5h6v3h-6zM72 713h4v4h-4zM164 825h3v7h-3z"/>
<path fill="#b4b4b4" d="M341 567h7v6h-7zM75 814h9v9h-9z"/>
<path fill="#0a5a14" d="M426 618h9v9h-9zM352.5 632h6v3h-6zM82 681h6v7h-6zM119 756h9v9h-9zM415 718.5h7v7h-7zM358.5 695h2v3h-2zM370 695h2v3h-2z"/>
<path fill="#d8b0a0" d="M431 621h3v3h-3z"/>
<path fill="#00ff00" d="M339 656.5h4v4h-4zM332 732h2v6h-2zM302.5 719h5v5h-5zM297.5 761.5h4v3h-4zM311.5 775h5v2h-5zM248 774h5v5h-5z"/>
<path fill="#c0c0c0" d="M120 760h3v3h-3z"/>
</g>
<path d="M191.5 629.5L236.5 655.5" stroke="#fff" stroke-width="1.6"/>

<path d="M101 491.5h11M106.5 486.0v11M191 491.5h11M196.5 486.0v11M281 491.5h11M286.5 486.0v11M371 491.5h11M376.5 486.0v11M461 491.5h11M466.5 486.0v11M101 581.5h11M106.5 576.0v11M191 581.5h11M196.5 576.0v11M281 581.5h11M286.5 576.0v11M371 581.5h11M376.5 576.0v11M461 581.5h11M466.5 576.0v11M101 671.5h11M106.5 666.0v11M191 671.5h11M196.5 666.0v11M281 671.5h11M286.5 666.0v11M371 671.5h11M376.5 666.0v11M461 671.5h11M466.5 666.0v11M101 761.5h11M106.5 756.0v11M191 761.5h11M196.5 756.0v11M281 761.5h11M286.5 756.0v11M371 761.5h11M376.5 756.0v11M461 761.5h11M466.5 756.0v11M101 850.5h11M106.5 845.0v11M191 850.5h11M196.5 845.0v11M281 850.5h11M286.5 845.0v11M371 850.5h11M376.5 845.0v11M461 850.5h11M466.5 845.0v11" stroke="#ffff00" stroke-width="1" fill="none" shape-rendering="crispEdges"/>
<g fill="#ffff00" stroke="#ffff00" stroke-width="0.3" font-family="Liberation Sans" font-size="18">
<text x="61.7" y="498.7" text-anchor="end">20.0</text><text x="61.7" y="588.7" text-anchor="end">10.0</text><text x="61.7" y="678.7" text-anchor="end">0.0</text><text x="61.7" y="768.7" text-anchor="end">−10.0</text><text x="61.7" y="857.7" text-anchor="end">−20.0</text><text x="106.5" y="899.5" text-anchor="middle">−20.0</text><text x="196.5" y="899.5" text-anchor="middle">−10.0</text><text x="286.5" y="899.5" text-anchor="middle">0.0</text><text x="376.5" y="899.5" text-anchor="middle">10.0</text><text x="466.5" y="899.5" text-anchor="middle">20.0</text></g>
<g shape-rendering="crispEdges"><rect x="507" y="492.5" width="10" height="15" fill="#ff0000"/><rect x="507" y="507.5" width="10" height="15" fill="#cd0000"/><rect x="507" y="522.5" width="10" height="15" fill="#8b0000"/><rect x="507" y="537.5" width="10" height="15" fill="#e05000"/><rect x="507" y="552.5" width="10" height="15" fill="#ff7f00"/><rect x="507" y="567.5" width="10" height="15" fill="#ff6060"/><rect x="507" y="582.5" width="10" height="15" fill="#ff9090"/><rect x="507" y="597.5" width="10" height="15" fill="#ffc0c0"/><rect x="507" y="612.5" width="10" height="15" fill="#ffff00"/><rect x="507" y="627.5" width="10" height="15" fill="#ffb820"/><rect x="507" y="642.5" width="10" height="15" fill="#d09060"/><rect x="507" y="657.5" width="10" height="15" fill="#a04808"/><rect x="507" y="672.5" width="10" height="15" fill="#b4b4b4"/><rect x="507" y="687.5" width="10" height="15" fill="#0a5a14"/><rect x="507" y="702.5" width="10" height="15" fill="#0c8c1c"/><rect x="507" y="717.5" width="10" height="15" fill="#10aa20"/><rect x="507" y="732.5" width="10" height="15" fill="#00ff00"/><rect x="507" y="747.5" width="10" height="15" fill="#00bfff"/><rect x="507" y="762.5" width="10" height="15" fill="#1080ff"/><rect x="507" y="777.5" width="10" height="15" fill="#0000cd"/><rect x="507" y="792.5" width="10" height="15" fill="#0020b0"/><rect x="507" y="807.5" width="10" height="15" fill="#00008b"/><rect x="507" y="822.5" width="10" height="15" fill="#9090c0"/><rect x="507" y="837.5" width="10" height="15" fill="#505088"/><rect x="507" y="852.5" width="10" height="15" fill="#707070"/><path d="M505 476.500H590M505 902.500H590" stroke="#a8a8a8" fill="none"/></g>
<g fill="#fff" font-family="Liberation Sans" font-weight="bold" font-size="7.5"><text x="506.5" y="485" textLength="19.5" lengthAdjust="spacingAndGlyphs" font-size="8">maxdz</text><text x="522" y="496.5">31.2</text><text x="522" y="511.5">28.8</text><text x="522" y="526.5">26.2</text><text x="522" y="541.5">23.8</text><text x="522" y="556.5">21.2</text><text x="522" y="571.5">18.8</text><text x="522" y="586.5">16.2</text><text x="522" y="601.5">13.8</text><text x="522" y="616.5">11.2</text><text x="522" y="631.5">8.8</text><text x="522" y="646.5">6.2</text><text x="522" y="661.5">3.8</text><text x="522" y="676.5">1.2</text><text x="522" y="691.5">−1.2</text><text x="522" y="706.5">−3.8</text><text x="522" y="721.5">−6.2</text><text x="522" y="736.5">−8.8</text><text x="522" y="751.5">−11.2</text><text x="522" y="766.5">−13.8</text><text x="522" y="781.5">−16.2</text><text x="522" y="796.5">−18.8</text><text x="522" y="811.5">−21.2</text><text x="522" y="826.5">−23.8</text><text x="522" y="841.5">−26.2</text><text x="522" y="856.5">−28.8</text><text x="522" y="871.5">−31.2</text></g>

</svg>
<div style="left:398px;top:919px;font-size:25px;line-height:30px;white-space:nowrap;transform:scaleX(0.948);transform-origin:0 0">Alt: 1.00 km MSL</div>
<div class="ic" style="left:23px;top:903px;width:46px;height:48px"><svg width="46" height="48"><use href="#iz"/></svg></div><div class="ic g" style="left:70px;top:903px;width:46px;height:48px"><svg width="46" height="48"><use href="#igoes"/></svg></div><div class="ic g" style="left:117px;top:903px;width:46px;height:48px"><svg width="46" height="48"><use href="#isur"/></svg></div><div class="ic" style="left:164px;top:903px;width:21px;height:48px"><svg width="21" height="48"><use href="#imap"/></svg></div><div class="ic g" style="left:186px;top:927px;width:22px;height:24px"><svg width="22" height="24"><use href="#icirc"/></svg></div><div class="ic g" style="left:209px;top:903px;width:46px;height:48px"><svg width="46" height="48"><use href="#iship"/></svg></div><div class="ic" style="left:256px;top:903px;width:46px;height:48px"><svg width="46" height="48"><use href="#igrid"/></svg></div><div class="ic g" style="left:303px;top:903px;width:21px;height:48px"><svg width="21" height="48"><use href="#iovl"/></svg></div><div class="ic" style="left:325px;top:927px;width:22px;height:24px"><svg width="22" height="24"><use href="#isgrid"/></svg></div><div class="ic" style="left:348px;top:903px;width:14px;height:48px"><svg width="14" height="48"><use href="#ibnd"/></svg></div>
</div>
</div>
<div style="left:17px;top:954px;width:570px;height:12px;background:#fff8dc"></div>
<div style="left:18px;top:954px;width:13px;height:10px;background:conic-gradient(#000 25%,#fff8dc 0 50%,#000 0 75%,#fff8dc 0) 0 0/2px 2px"></div>
<div style="left:32px;top:954px;width:1px;height:11px;background:#000"></div>
<div style="left:35px;top:954px;width:9px;height:9px;background:#228b22"></div>
<div class="tb" style="left:17px;top:408px;width:154px"><i class="b c" style="left:2px"></i><i class="b d" style="left:21px"><svg width="13" height="13" shape-rendering="crispEdges"><path d="M2.500 1.500h7v9h-7zM4.500 4.500h3M4.500 6.500h3M4.500 8.500h3" fill="none" stroke="#dcdcdc"/><path d="M10.500 2.500V11.500H3.500" fill="none" stroke="#dcdcdc" stroke-width="1.6"/></svg></i><span style="left:44px">big2</span><i class="b o" style="left:117px"></i><i class="b m" style="left:136px"><svg width="13" height="13"><path d="M4.500 0v5.500h-4.500M8.500 0v8.500h-8.500" fill="none" stroke="#dcdcdc"/></svg></i></div>


<style>.xt{font-size:18px;line-height:26px;white-space:nowrap;color:#fff}.xt b{color:#ffff00}</style>
<div class="tb" style="left:593px;top:26px;width:163px"><i class="b c" style="left:2px"></i><i class="b d" style="left:21px"><svg width="13" height="13" shape-rendering="crispEdges"><path d="M2.500 1.500h7v9h-7zM4.500 4.500h3M4.500 6.500h3M4.500 8.500h3" fill="none" stroke="#dcdcdc"/><path d="M10.500 2.500V11.500H3.500" fill="none" stroke="#dcdcdc" stroke-width="1.6"/></svg></i><span style="left:44px">xsect</span><i class="b o" style="left:125px"></i><i class="b m" style="left:144px"><svg width="13" height="13"><path d="M4.500 0v5.500h-4.500M8.500 0v8.500h-8.500" fill="none" stroke="#dcdcdc"/></svg></i></div>
<div class="win" style="left:593px;top:46px;width:562px;height:382px">
<div style="left:-594px;top:-47px;width:0;height:0">
<svg width="1280" height="1024" style="left:0;top:0">
<path d="M644.5 73.5H1070.5V352.5H644.5zM644.5 330.5h11M1070.5 330.5h-11M644.5 308.5h11M1070.5 308.5h-11M644.5 285.5h11M1070.5 285.5h-11M644.5 263.5h11M1070.5 263.5h-11M644.5 241.5h11M1070.5 241.5h-11M644.5 218.5h11M1070.5 218.5h-11M644.5 196.5h11M1070.5 196.5h-11M644.5 173.5h11M1070.5 173.5h-11M644.5 151.5h11M1070.5 151.5h-11M644.5 129.5h11M1070.5 129.5h-11M644.5 106.5h11M1070.5 106.5h-11M644.5 84.5h11M1070.5 84.5h-11M697.5 352.5v-7M697.5 73.5v7M750.5 352.5v-7M750.5 73.5v7M804.5 352.5v-7M804.5 73.5v7M857.5 352.5v-7M857.5 73.5v7M910.5 352.5v-7M910.5 73.5v7M964.5 352.5v-7M964.5 73.5v7M1017.5 352.5v-7M1017.5 73.5v7" fill="none" stroke="#fff" stroke-width="1" shape-rendering="crispEdges"/>
<g fill="#fff" font-family="Liberation Sans" font-size="9.5"><text x="641.0" y="352.0" text-anchor="end">0.0</text><text x="641.0" y="308.0" text-anchor="end">0.4</text><text x="641.0" y="263.0" text-anchor="end">0.8</text><text x="641.0" y="218.0" text-anchor="end">1.2</text><text x="641.0" y="173.0" text-anchor="end">1.6</text><text x="641.0" y="129.0" text-anchor="end">2.0</text><text x="641.0" y="84.0" text-anchor="end">2.4</text><text x="644.5" y="363.0" text-anchor="middle">0.0</text><text x="751.0" y="363.0" text-anchor="middle">1.5</text><text x="857.5" y="363.0" text-anchor="middle">2.9</text><text x="964.0" y="363.0" text-anchor="middle">4.4</text><text x="1070.5" y="363.0" text-anchor="middle">5.9</text><text x="857.5" y="372.0" text-anchor="middle" textLength="67" lengthAdjust="spacingAndGlyphs">Distance in km</text></g>
<text transform="translate(625.0,213.5) rotate(-90)" text-anchor="middle" fill="#fff" font-family="Liberation Mono" font-size="12" textLength="89">km above MSL</text>

<clipPath id="xc1"><path d="M670.0 329.0L670.0 289.0L713.0 289.0L713.0 267.0L756.0 267.0L756.0 244.0L883.0 244.0L885.0 241.5L885.0 220.7L889.0 220.7L889.0 289.0L945.0 289.0L945.0 312.0L984.0 312.0L984.0 329.0zM1001.0 329.0L1001.0 312.0L1070.5 312.0L1070.5 329.0z"/></clipPath>
<g clip-path="url(#xc1)" shape-rendering="crispEdges">
<path d="M670.0 329.0L670.0 289.0L713.0 289.0L713.0 267.0L756.0 267.0L756.0 244.0L883.0 244.0L885.0 241.5L885.0 220.7L889.0 220.7L889.0 289.0L945.0 289.0L945.0 312.0L984.0 312.0L984.0 329.0zM1001.0 329.0L1001.0 312.0L1070.5 312.0L1070.5 329.0z" fill="#00bfff"/>
<path d="M819.8 244.1L845.2 244.1L841.1 247.1L833.0 249.2L824.8 247.7z" fill="#1080ff"/>
<path d="M754.8 332.0L754.8 247.7L765.9 247.7L770.0 244.1L808.6 244.1L812.7 250.8L816.7 258.9L818.8 267.0L820.8 272.1L828.9 272.1L835.0 269.1L841.1 265.0L847.2 263.0L853.3 266.0L857.3 275.2L861.4 281.3L863.4 289.4L863.4 295.5L859.4 299.5L858.4 306.6L863.4 306.6L863.8 295.5L867.5 289.4L873.6 286.3L880.7 282.3L884.8 284.3L888.8 289.0L888.8 289.0L892.8 291.4L900.9 293.4L909.1 296.5L915.2 301.6L919.2 309.7L921.3 314.8L927.3 317.8L937.5 318.8L947.7 317.8L953.8 314.8L957.8 312.1L971.0 312.1L976.1 317.8L980.2 325.9L981.6 332.0z" fill="#00ff00"/>
<path d="M1021.8 332.0L1024.2 312.1L1070.1 312.1L1071 312V331z" fill="#00ff00"/>
<path d="M744.0 332.0L744.0 267.0L756.2 267.0L756.2 255.9L759.8 258.9L763.9 263.0L767.0 269.1L772.0 274.1L778.1 272.1L784.2 268.0L794.4 267.0L802.5 269.1L808.6 275.2L811.6 285.3L811.6 306.6L818.8 306.6L822.8 301.6L828.9 293.4L835.0 289.4L843.1 288.4L847.2 301.6L851.3 313.8L857.3 316.8L869.5 316.8L885.8 315.8L893.9 309.7L900.0 306.0L905.4 306.6L905.4 321.9L903.4 332.0z" fill="#10aa20"/>
<path d="M684.3 332.0L684.3 289.0L713.1 289.0L713.1 267.0L721.3 267.0L729.4 271.1L737.5 273.5L743.6 275.2L745.6 281.3L746.6 289.4L749.7 296.5L755.8 301.6L761.9 307.7L770.0 308.7L776.1 303.6L780.2 302.6L786.3 305.6L792.3 310.7L802.5 314.8L812.7 315.8L820.8 313.8L826.9 310.7L833.0 308.7L838.0 309.7L841.1 313.8L845.2 319.8L853.3 323.9L863.4 325.9L875.6 328.0L883.8 332.0z" fill="#0c8c1c"/>
<path d="M721.3 267.0L745.6 267.0L745.6 275.6L743.6 275.2L737.5 273.5L729.4 271.1z" fill="#10aa20"/>
<path d="M747.7 267.0L754.2 267.0L751.3 271.5L748.7 270.7zM958.8 332.0L960.9 327.0L964.9 326.3L968.0 332.0z" fill="#0c8c1c"/>
<path d="M684.3 332.0L684.3 289.0L687.7 290.4L690.8 297.5L694.8 299.9L700.9 299.5L709.1 293.4L715.2 286.3L721.3 283.3L729.4 282.3L735.5 284.3L737.5 291.4L738.5 301.6L740.5 309.7L747.7 314.8L755.8 316.8L761.9 319.8L770.0 322.9L778.1 321.9L784.2 319.8L792.3 320.9L802.5 323.9L810.6 323.9L820.8 322.9L828.9 325.9L833.0 332.0z" fill="#0a5a14"/>
<path d="M668.4 332.0L668.4 289.0L684.3 289.0L684.7 307.7L690.8 313.8L699.9 321.9L703.4 332.0zM746.6 332.0L749.7 327.6L754.8 327.2L757.4 332.0z" fill="#b4b4b4"/>
<path d="M668.4 289.0L682.0 289.0Q681.6 301.6 668.4 309.7z" fill="#a04808"/><path d="M668.4 289.0L679.6 289.0Q678.6 295.5 668.4 299.9z" fill="#d09060"/>
</g>

<rect x="1071.0" y="73" width="83.5" height="302.5" fill="#000"/><g shape-rendering="crispEdges"><rect x="1072.0" y="97" width="10" height="11" fill="#ff0000"/><rect x="1072.0" y="108" width="10" height="11" fill="#cd0000"/><rect x="1072.0" y="119" width="10" height="11" fill="#8b0000"/><rect x="1072.0" y="130" width="10" height="11" fill="#e05000"/><rect x="1072.0" y="141" width="10" height="11" fill="#ff7f00"/><rect x="1072.0" y="152" width="10" height="11" fill="#ff6060"/><rect x="1072.0" y="163" width="10" height="11" fill="#ff9090"/><rect x="1072.0" y="174" width="10" height="11" fill="#ffc0c0"/><rect x="1072.0" y="185" width="10" height="11" fill="#ffff00"/><rect x="1072.0" y="196" width="10" height="11" fill="#ffb820"/><rect x="1072.0" y="207" width="10" height="11" fill="#d09060"/><rect x="1072.0" y="218" width="10" height="11" fill="#a04808"/><rect x="1072.0" y="229" width="10" height="11" fill="#b4b4b4"/><rect x="1072.0" y="240" width="10" height="11" fill="#0a5a14"/><rect x="1072.0" y="251" width="10" height="11" fill="#0c8c1c"/><rect x="1072.0" y="262" width="10" height="11" fill="#10aa20"/><rect x="1072.0" y="273" width="10" height="11" fill="#00ff00"/><rect x="1072.0" y="284" width="10" height="11" fill="#00bfff"/><rect x="1072.0" y="295" width="10" height="11" fill="#1080ff"/><rect x="1072.0" y="306" width="10" height="11" fill="#0000cd"/><rect x="1072.0" y="317" width="10" height="11" fill="#0020b0"/><rect x="1072.0" y="328" width="10" height="11" fill="#00008b"/><rect x="1072.0" y="339" width="10" height="11" fill="#9090c0"/><rect x="1072.0" y="350" width="10" height="11" fill="#505088"/><rect x="1072.0" y="361" width="10" height="11" fill="#707070"/><path d="M1070.5 72.5H1154M1070.5 376.0H1154" stroke="#a8a8a8" fill="none"/></g>
<text transform="translate(1072,91.5) scale(1,1.2)" fill="#fff" font-family="Liberation Sans" font-size="12" textLength="33" lengthAdjust="spacingAndGlyphs">maxdz</text><g fill="#fff" font-family="Liberation Sans" font-size="11"><text transform="translate(1087,108.3) scale(1,1.27)">30.0</text><text transform="translate(1087,119.3) scale(1,1.27)">27.5</text><text transform="translate(1087,130.3) scale(1,1.27)">25.0</text><text transform="translate(1087,141.3) scale(1,1.27)">22.5</text><text transform="translate(1087,152.3) scale(1,1.27)">20.0</text><text transform="translate(1087,163.3) scale(1,1.27)">17.5</text><text transform="translate(1087,174.3) scale(1,1.27)">15.0</text><text transform="translate(1087,185.3) scale(1,1.27)">12.5</text><text transform="translate(1087,196.3) scale(1,1.27)">10.0</text><text transform="translate(1087,207.3) scale(1,1.27)">7.5</text><text transform="translate(1087,218.3) scale(1,1.27)">5.0</text><text transform="translate(1087,229.3) scale(1,1.27)">2.5</text><text transform="translate(1087,240.3) scale(1,1.27)">0.0</text><text transform="translate(1087,251.3) scale(1,1.27)">−2.5</text><text transform="translate(1087,262.3) scale(1,1.27)">−5.0</text><text transform="translate(1087,273.3) scale(1,1.27)">−7.5</text><text transform="translate(1087,284.3) scale(1,1.27)">−10.0</text><text transform="translate(1087,295.3) scale(1,1.27)">−12.5</text><text transform="translate(1087,306.3) scale(1,1.27)">−15.0</text><text transform="translate(1087,317.3) scale(1,1.27)">−17.5</text><text transform="translate(1087,328.3) scale(1,1.27)">−20.0</text><text transform="translate(1087,339.3) scale(1,1.27)">−22.5</text><text transform="translate(1087,350.3) scale(1,1.27)">−25.0</text><text transform="translate(1087,361.3) scale(1,1.27)">−27.5</text><text transform="translate(1087,372.3) scale(1,1.27)">−30.0</text></g>

</svg>
<div class="xt" style="left:604px;top:45.5px;letter-spacing:-0.19px"><b>6−sep−1997,02:21:00</b></div><div class="xt" style="left:792px;top:45.5px;letter-spacing:0.12px">Planar cross−section plot.</div><div class="xt" style="left:1015px;top:45.5px;letter-spacing:0.5px">Contour of</div><div class="xt" style="left:604px;top:71.5px;letter-spacing:0.0px">maxdz using: rhb_hires.</div>
<div class="ic" style="left:599px;top:377px;width:46px;height:48px"><svg width="46" height="48"><use href="#iz"/></svg></div><div class="ic g" style="left:646px;top:377px;width:46px;height:48px"><svg width="46" height="48"><use href="#ixs"/></svg></div><div class="ic g" style="left:693px;top:377px;width:46px;height:48px"><svg width="46" height="48"><use href="#ixs"/></svg></div><div class="ic" style="left:740px;top:377px;width:46px;height:48px"><svg width="46" height="48"><use href="#ixs"/></svg></div>
</div>
</div>


<div class="win" style="left:594px;top:430px;width:562px;height:385px">
<div style="left:-595px;top:-431px;width:0;height:0">
<svg width="1280" height="1024" style="left:0;top:0">
<path d="M645.5 457.5H1071.5V739.5H645.5zM645.5 716.5h11M1071.5 716.5h-11M645.5 694.5h11M1071.5 694.5h-11M645.5 671.5h11M1071.5 671.5h-11M645.5 649.5h11M1071.5 649.5h-11M645.5 626.5h11M1071.5 626.5h-11M645.5 604.5h11M1071.5 604.5h-11M645.5 581.5h11M1071.5 581.5h-11M645.5 558.5h11M1071.5 558.5h-11M645.5 536.5h11M1071.5 536.5h-11M645.5 513.5h11M1071.5 513.5h-11M645.5 491.5h11M1071.5 491.5h-11M645.5 468.5h11M1071.5 468.5h-11M698.5 739.5v-7M698.5 457.5v7M752.5 739.5v-7M752.5 457.5v7M805.5 739.5v-7M805.5 457.5v7M858.5 739.5v-7M858.5 457.5v7M911.5 739.5v-7M911.5 457.5v7M964.5 739.5v-7M964.5 457.5v7M1018.5 739.5v-7M1018.5 457.5v7" fill="none" stroke="#fff" stroke-width="1" shape-rendering="crispEdges"/>
<g fill="#fff" font-family="Liberation Sans" font-size="9.5"><text x="642.0" y="739.0" text-anchor="end">0.0</text><text x="642.0" y="694.0" text-anchor="end">0.4</text><text x="642.0" y="649.0" text-anchor="end">0.8</text><text x="642.0" y="604.0" text-anchor="end">1.2</text><text x="642.0" y="558.0" text-anchor="end">1.6</text><text x="642.0" y="513.0" text-anchor="end">2.0</text><text x="642.0" y="468.0" text-anchor="end">2.4</text><text x="645.5" y="750.0" text-anchor="middle">0.0</text><text x="752.0" y="750.0" text-anchor="middle">1.5</text><text x="858.5" y="750.0" text-anchor="middle">2.9</text><text x="965.0" y="750.0" text-anchor="middle">4.4</text><text x="1071.5" y="750.0" text-anchor="middle">5.9</text><text x="858.5" y="759.0" text-anchor="middle" textLength="67" lengthAdjust="spacingAndGlyphs">Distance in km</text></g>
<text transform="translate(626.0,599.0) rotate(-90)" text-anchor="middle" fill="#fff" font-family="Liberation Mono" font-size="12" textLength="89">km above MSL</text>

<clipPath id="xc2"><path d="M671.0 716.0L671.0 676.0L714.0 676.0L714.0 653.0L757.0 653.0L757.0 630.0L884.5 630.0L886.5 627.5L886.5 607.3L890.0 607.3L890.0 676.0L925.0 676.0L925.0 699.0L985.0 699.0L985.0 716.0zM1002.0 716.0L1002.0 699.0L1049.0 699.0L1049.0 716.0z"/></clipPath>
<g clip-path="url(#xc2)" shape-rendering="crispEdges">
<path d="M671.0 716.0L671.0 676.0L714.0 676.0L714.0 653.0L757.0 653.0L757.0 630.0L884.5 630.0L886.5 627.5L886.5 607.3L890.0 607.3L890.0 676.0L925.0 676.0L925.0 699.0L985.0 699.0L985.0 716.0z" fill="#10aa20"/><path d="M1002.0 716.0L1002.0 699.0L1049.0 699.0L1049.0 716.0z" fill="#00ff00"/>
<path d="M680.3 675.9L701.6 675.9L697.6 691.6L692.5 699.7L686.4 687.5zM757.5 647.9L769.7 643.2L776.8 642.4L782.9 646.9L773.8 650.9L765.6 651.5zM852.6 630.0L863.1 630.0L860.1 638.8L856.0 635.7zM720.9 716.3L730.1 709.8L734.1 709.8L740.2 716.3zM886.5 607.3L890.1 607.3L890.1 620.5L886.5 620.5z" fill="#0c8c1c"/>
<path d="M765.6 691.6L768.7 679.4L773.8 670.2L781.9 666.8L791.0 668.2L795.1 675.3L795.7 691.6L790.0 699.7L781.9 702.7L773.8 701.7L767.7 696.6zM809.3 687.5L811.3 675.3L817.4 670.2L826.6 672.3L838.8 672.3L853.0 674.3L865.2 673.3L875.3 665.2L883.4 658.0L889.9 657.0L890.1 675.9L920.9 675.9L922.0 687.5L920.9 699.7L916.9 707.8L908.8 712.9L900.6 713.9L890.5 710.9L880.3 708.8L872.2 706.8L860.0 707.8L850.9 706.2L838.8 706.8L826.6 706.2L820.5 703.8L814.4 695.6zM932.7 699.1L967.7 699.1L949.4 716.3L938.2 716.3L936.2 707.8zM969.7 699.1L980.9 699.1L978.8 704.8L972.7 705.8z" fill="#00ff00"/>
<path d="M890.1 669.2L885.4 671.3L884.0 679.4L884.4 691.6L890.5 700.7L900.6 706.8L905.7 705.8L912.8 697.7L915.9 689.5L913.2 680.4L910.8 675.9L890.1 675.9zM830.6 693.6L839.8 689.1L846.9 693.6L839.8 697.3z" fill="#00bfff"/>
<path d="M894.1 692.6L901.6 685.1L905.7 685.5L907.7 693.6L903.7 698.7L899.6 697.7z" fill="#1080ff"/>
<path d="M1001.8 707.8L1007.3 709.8L1013.4 716.3L1001.8 716.3z" fill="#10aa20"/>
<path d="M1001.8 699.1L1029.0 699.1L1025.5 703.8L1020.5 706.2L1014.4 703.8L1008.3 701.7z" fill="#00bfff"/>
</g>

<rect x="1072.0" y="457" width="83.5" height="305.5" fill="#000"/><g shape-rendering="crispEdges"><rect x="1073.0" y="480" width="10" height="11" fill="#ff0000"/><rect x="1073.0" y="491" width="10" height="11" fill="#cd0000"/><rect x="1073.0" y="502" width="10" height="11" fill="#8b0000"/><rect x="1073.0" y="513" width="10" height="11" fill="#e05000"/><rect x="1073.0" y="524" width="10" height="11" fill="#ff7f00"/><rect x="1073.0" y="535" width="10" height="11" fill="#ff6060"/><rect x="1073.0" y="546" width="10" height="11" fill="#ff9090"/><rect x="1073.0" y="557" width="10" height="11" fill="#ffc0c0"/><rect x="1073.0" y="568" width="10" height="11" fill="#ffff00"/><rect x="1073.0" y="579" width="10" height="11" fill="#ffb820"/><rect x="1073.0" y="590" width="10" height="11" fill="#d09060"/><rect x="1073.0" y="601" width="10" height="11" fill="#a04808"/><rect x="1073.0" y="612" width="10" height="11" fill="#b4b4b4"/><rect x="1073.0" y="623" width="10" height="11" fill="#0a5a14"/><rect x="1073.0" y="634" width="10" height="11" fill="#0c8c1c"/><rect x="1073.0" y="645" width="10" height="11" fill="#10aa20"/><rect x="1073.0" y="656" width="10" height="11" fill="#00ff00"/><rect x="1073.0" y="667" width="10" height="11" fill="#00bfff"/><rect x="1073.0" y="678" width="10" height="11" fill="#1080ff"/><rect x="1073.0" y="689" width="10" height="11" fill="#0000cd"/><rect x="1073.0" y="700" width="10" height="11" fill="#0020b0"/><rect x="1073.0" y="711" width="10" height="11" fill="#00008b"/><rect x="1073.0" y="722" width="10" height="11" fill="#9090c0"/><rect x="1073.0" y="733" width="10" height="11" fill="#505088"/><rect x="1073.0" y="744" width="10" height="10" fill="#707070"/><path d="M1071.5 456.5H1155M1071.5 763.0H1155" stroke="#a8a8a8" fill="none"/></g>
<text x="1073" y="471.5" fill="#fff" font-family="Liberation Sans" font-size="11" textLength="74" lengthAdjust="spacingAndGlyphs">radialvelocity</text><g fill="#fff" font-family="Liberation Sans" font-size="11.5"><text transform="translate(1088,490.0) scale(1,1.0)">12.0</text><text transform="translate(1088,500.9) scale(1,1.0)">11.0</text><text transform="translate(1088,511.9) scale(1,1.0)">10.0</text><text transform="translate(1088,522.8) scale(1,1.0)">9.0</text><text transform="translate(1088,533.8) scale(1,1.0)">8.0</text><text transform="translate(1088,544.8) scale(1,1.0)">7.0</text><text transform="translate(1088,555.7) scale(1,1.0)">6.0</text><text transform="translate(1088,566.7) scale(1,1.0)">5.0</text><text transform="translate(1088,577.6) scale(1,1.0)">4.0</text><text transform="translate(1088,588.6) scale(1,1.0)">3.0</text><text transform="translate(1088,599.6) scale(1,1.0)">2.0</text><text transform="translate(1088,610.5) scale(1,1.0)">1.0</text><text transform="translate(1088,621.5) scale(1,1.0)">0.0</text><text transform="translate(1088,632.4) scale(1,1.0)">−1.0</text><text transform="translate(1088,643.4) scale(1,1.0)">−2.0</text><text transform="translate(1088,654.4) scale(1,1.0)">−3.0</text><text transform="translate(1088,665.3) scale(1,1.0)">−4.0</text><text transform="translate(1088,676.3) scale(1,1.0)">−5.0</text><text transform="translate(1088,687.2) scale(1,1.0)">−6.0</text><text transform="translate(1088,698.2) scale(1,1.0)">−7.0</text><text transform="translate(1088,709.2) scale(1,1.0)">−8.0</text><text transform="translate(1088,720.1) scale(1,1.0)">−9.0</text><text transform="translate(1088,731.1) scale(1,1.0)">−10.0</text><text transform="translate(1088,742.0) scale(1,1.0)">−11.0</text><text transform="translate(1088,753.0) scale(1,1.0)">−12.0</text></g>

</svg>
<div class="xt" style="left:605.3px;top:429.5px;letter-spacing:-0.19px"><b>6−sep−1997,02:21:00</b></div><div class="xt" style="left:793.3px;top:429.5px;letter-spacing:0.12px">Planar cross−section plot.</div><div class="xt" style="left:1016.3px;top:429.5px;letter-spacing:0.5px">Contour of</div><div class="xt" style="left:605.3px;top:455.5px;letter-spacing:0.12px">radialvelocity using: rhb_hires.</div>
<div class="ic" style="left:600px;top:764px;width:46px;height:48px"><svg width="46" height="48"><use href="#iz"/></svg></div><div class="ic g" style="left:647px;top:764px;width:46px;height:48px"><svg width="46" height="48"><use href="#ixs"/></svg></div><div class="ic g" style="left:694px;top:764px;width:46px;height:48px"><svg width="46" height="48"><use href="#ixs"/></svg></div><div class="ic" style="left:741px;top:764px;width:46px;height:48px"><svg width="46" height="48"><use href="#ixs"/></svg></div>
</div>
</div>
<div class="tb" style="left:594px;top:410px;width:170px"><i class="b c" style="left:2px"></i><i class="b d" style="left:21px"><svg width="13" height="13" shape-rendering="crispEdges"><path d="M2.500 1.500h7v9h-7zM4.500 4.500h3M4.500 6.500h3M4.500 8.500h3" fill="none" stroke="#dcdcdc"/><path d="M10.500 2.500V11.500H3.500" fill="none" stroke="#dcdcdc" stroke-width="1.6"/></svg></i><span style="left:44px">xsectb</span><i class="b o" style="left:132px"></i><i class="b m" style="left:151px"><svg width="13" height="13"><path d="M4.500 0v5.500h-4.500M8.500 0v8.500h-8.500" fill="none" stroke="#dcdcdc"/></svg></i></div>


<div class="tb" style="left:1158px;top:495px;width:102px;overflow:hidden"><i class="b c" style="left:2px"></i><i class="b d" style="left:21px"><svg width="13" height="13" shape-rendering="crispEdges"><path d="M2.500 1.500h7v9h-7zM4.500 4.500h3M4.500 6.500h3M4.500 8.500h3" fill="none" stroke="#dcdcdc"/><path d="M10.500 2.500V11.500H3.500" fill="none" stroke="#dcdcdc" stroke-width="1.6"/></svg></i><span style="left:44px">icons</span><i class="b o" style="left:64px;background:#006400"></i><i class="b m" style="left:83px;background:#006400"><svg width="13" height="13"><path d="M4.500 0v5.500h-4.500M8.500 0v8.500h-8.500" fill="none" stroke="#dcdcdc"/></svg></i></div>
<div class="win" style="left:1158px;top:515px;width:102px;height:520px;background:#5f9ea0">
<div style="left:-1159px;top:-516px;width:0;height:0">
<div style="left:1163px;top:520px;width:93px;height:520px;border:2px solid #000"></div>
<style>.pi{left:1169px;width:52px;height:48px;border:2px solid #000;background:#191970;color:#ffff00}.pi svg{left:0;top:0}</style>
<div class="pi" style="top:526px"><svg width="46" height="48" style="left:1px;top:-2.500px"><use href="#iz"/></svg></div>
<div class="pi" style="top:578px"><svg width="48" height="44"><use href="#iprint"/></svg></div>
<div class="pi" style="top:630px"><svg width="48" height="44"><use href="#isat"/></svg></div>
<div class="pi" style="top:682px"><svg width="48" height="44"><use href="#iovl2"/></svg></div>
<div class="pi" style="top:734px"><svg width="48" height="44"><use href="#iradar"/></svg></div>
<div class="pi" style="top:786px"><svg width="46" height="48" style="left:1px;top:-2px"><use href="#iship"/></svg></div>
</div>
</div>


<div class="tb" style="left:595px;top:818px;width:175px"><i class="b c" style="left:2px"></i><i class="b d" style="left:21px"><svg width="13" height="13" shape-rendering="crispEdges"><path d="M2.500 1.500h7v9h-7zM4.500 4.500h3M4.500 6.500h3M4.500 8.500h3" fill="none" stroke="#dcdcdc"/><path d="M10.500 2.500V11.500H3.500" fill="none" stroke="#dcdcdc" stroke-width="1.6"/></svg></i><span style="left:44px">overlay</span><i class="b o" style="left:137px"></i><i class="b m" style="left:156px"><svg width="13" height="13"><path d="M4.500 0v5.500h-4.500M8.500 0v8.500h-8.500" fill="none" stroke="#dcdcdc"/></svg></i></div>
<div class="win" style="left:595px;top:838px;width:659px;height:117px">
<div style="left:-596px;top:-839px;width:0;height:0">
<div style="left:604px;top:846px;font:bold 11px 'Liberation Sans',sans-serif;white-space:nowrap;letter-spacing:-0.2px;line-height:16px;transform:scale(0.94,1.12);transform-origin:0 50%">Data times for big2</div>
<div style="left:706px;top:843px;width:31px;height:24px;border:2px solid #fff;font-size:12.5px;line-height:20px;text-align:center"><span style="position:static;display:inline-block;transform:scaleX(0.78)">Help</span></div>
<div style="left:742px;top:843px;width:46px;height:24px;border:2px solid #fff;font-size:12.5px;line-height:20px;text-align:center"><span style="position:static;display:inline-block;transform:scaleX(0.78);margin:0 -6px">Dismiss</span></div>
<div style="left:601px;top:870px;width:646px;height:77px;border:2px solid #fff"></div>
<pre style="position:absolute;margin:0;left:605px;top:874.5px;font:14px/15px 'Liberation Mono',monospace;letter-spacing:0.6px;color:#fff">COMPONENT      PLATFORM   FIELD      ALTITUDE       TIME
c_radar        rhb_hires  maxdz      1.00 km MSL    6-Sep-97,2:20:25</pre>
</div>
</div>

</div></body></html>
